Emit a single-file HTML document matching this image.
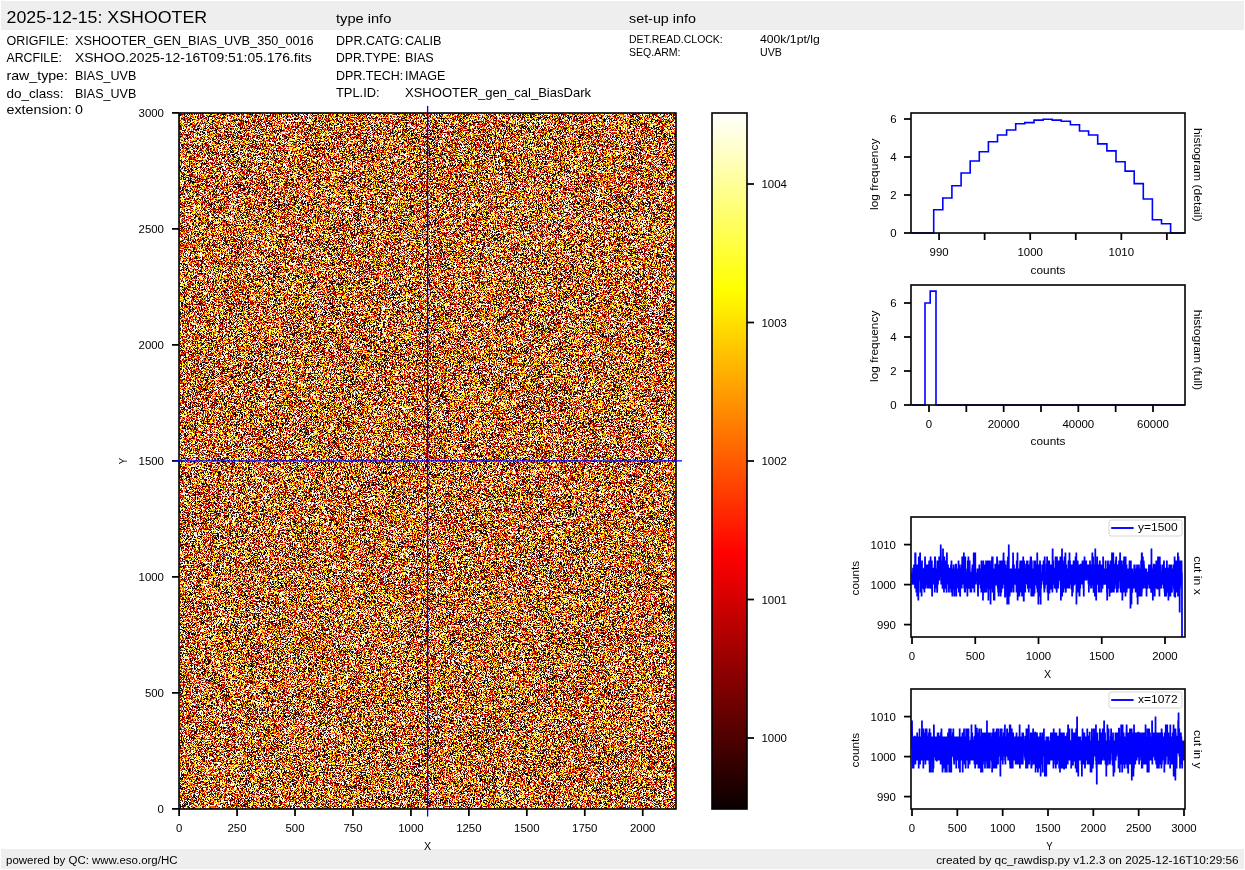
<!DOCTYPE html>
<html><head><meta charset="utf-8"><style>
html,body{margin:0;padding:0;background:#fff;width:1245px;height:870px;overflow:hidden}
#wrap{position:relative;width:1245px;height:870px}
#img{position:absolute;left:179px;top:113px;width:497px;height:696px;background:#bd753a}
svg{position:absolute;left:0;top:0}
text{font-family:"Liberation Sans",sans-serif;fill:#000}
</style></head><body><div id="wrap">
<canvas id="img" width="497" height="696"></canvas>
<svg width="1245" height="870" viewBox="0 0 1245 870">
<rect x="1.00" y="1.00" width="1243.00" height="29.00" fill="#eeeeee" stroke="none" stroke-width="0"/>
<rect x="1.00" y="849.00" width="1243.00" height="20.00" fill="#eeeeee" stroke="none" stroke-width="0"/>
<text x="6.50" y="22.70" font-size="16.97" text-anchor="start" textLength="200.70" lengthAdjust="spacingAndGlyphs">2025-12-15: XSHOOTER</text>
<text x="336.00" y="22.80" font-size="12.73" text-anchor="start" textLength="55.33" lengthAdjust="spacingAndGlyphs">type info</text>
<text x="629.00" y="22.70" font-size="12.73" text-anchor="start" textLength="66.89" lengthAdjust="spacingAndGlyphs">set-up info</text>
<text x="6.50" y="45.00" font-size="12.73" text-anchor="start" textLength="61.86" lengthAdjust="spacingAndGlyphs">ORIGFILE:</text>
<text x="75.00" y="45.00" font-size="12.73" text-anchor="start" textLength="238.69" lengthAdjust="spacingAndGlyphs">XSHOOTER_GEN_BIAS_UVB_350_0016</text>
<text x="6.50" y="61.90" font-size="12.73" text-anchor="start" textLength="55.30" lengthAdjust="spacingAndGlyphs">ARCFILE:</text>
<text x="75.00" y="61.90" font-size="12.73" text-anchor="start" textLength="236.61" lengthAdjust="spacingAndGlyphs">XSHOO.2025-12-16T09:51:05.176.fits</text>
<text x="6.50" y="80.00" font-size="12.73" text-anchor="start" textLength="61.41" lengthAdjust="spacingAndGlyphs">raw_type:</text>
<text x="75.00" y="80.00" font-size="12.73" text-anchor="start" textLength="61.28" lengthAdjust="spacingAndGlyphs">BIAS_UVB</text>
<text x="6.50" y="97.80" font-size="12.73" text-anchor="start" textLength="57.08" lengthAdjust="spacingAndGlyphs">do_class:</text>
<text x="75.00" y="97.80" font-size="12.73" text-anchor="start" textLength="61.28" lengthAdjust="spacingAndGlyphs">BIAS_UVB</text>
<text x="6.50" y="113.60" font-size="12.73" text-anchor="start" textLength="65.14" lengthAdjust="spacingAndGlyphs">extension:</text>
<text x="75.00" y="113.60" font-size="12.73" text-anchor="start" textLength="7.95" lengthAdjust="spacingAndGlyphs">0</text>
<text x="336.00" y="44.70" font-size="12.73" text-anchor="start" textLength="67.22" lengthAdjust="spacingAndGlyphs">DPR.CATG:</text>
<text x="405.00" y="44.70" font-size="12.73" text-anchor="start" textLength="36.52" lengthAdjust="spacingAndGlyphs">CALIB</text>
<text x="336.00" y="61.90" font-size="12.73" text-anchor="start" textLength="64.28" lengthAdjust="spacingAndGlyphs">DPR.TYPE:</text>
<text x="405.00" y="61.90" font-size="12.73" text-anchor="start" textLength="28.75" lengthAdjust="spacingAndGlyphs">BIAS</text>
<text x="336.00" y="79.70" font-size="12.73" text-anchor="start" textLength="67.25" lengthAdjust="spacingAndGlyphs">DPR.TECH:</text>
<text x="405.00" y="79.70" font-size="12.73" text-anchor="start" textLength="40.38" lengthAdjust="spacingAndGlyphs">IMAGE</text>
<text x="336.00" y="97.00" font-size="12.73" text-anchor="start" textLength="43.64" lengthAdjust="spacingAndGlyphs">TPL.ID:</text>
<text x="405.00" y="97.00" font-size="12.73" text-anchor="start" textLength="185.98" lengthAdjust="spacingAndGlyphs">XSHOOTER_gen_cal_BiasDark</text>
<text x="629.00" y="42.90" font-size="10.61" text-anchor="start" textLength="93.77" lengthAdjust="spacingAndGlyphs">DET.READ.CLOCK:</text>
<text x="760.00" y="42.90" font-size="10.61" text-anchor="start" textLength="59.72" lengthAdjust="spacingAndGlyphs">400k/1pt/lg</text>
<text x="629.00" y="55.90" font-size="10.61" text-anchor="start" textLength="51.53" lengthAdjust="spacingAndGlyphs">SEQ.ARM:</text>
<text x="760.00" y="55.90" font-size="10.61" text-anchor="start" textLength="21.88" lengthAdjust="spacingAndGlyphs">UVB</text>
<text x="6.00" y="864.00" font-size="10.61" text-anchor="start" textLength="171.48" lengthAdjust="spacingAndGlyphs">powered by QC: www.eso.org/HC</text>
<text x="1238.70" y="864.00" font-size="10.61" text-anchor="end" textLength="302.50" lengthAdjust="spacingAndGlyphs">created by qc_rawdisp.py v1.2.3 on 2025-12-16T10:29:56</text>
<rect x="179.00" y="113.00" width="497.00" height="696.00" fill="none" stroke="#000" stroke-width="1.6"/>
<line x1="179.12" y1="809.00" x2="179.12" y2="816.00" stroke="#000" stroke-width="1.75"/>
<text x="179.12" y="831.80" font-size="10.18" text-anchor="middle" textLength="6.36" lengthAdjust="spacingAndGlyphs">0</text>
<line x1="237.07" y1="809.00" x2="237.07" y2="816.00" stroke="#000" stroke-width="1.75"/>
<text x="237.07" y="831.80" font-size="10.18" text-anchor="middle" textLength="19.08" lengthAdjust="spacingAndGlyphs">250</text>
<line x1="295.02" y1="809.00" x2="295.02" y2="816.00" stroke="#000" stroke-width="1.75"/>
<text x="295.02" y="831.80" font-size="10.18" text-anchor="middle" textLength="19.08" lengthAdjust="spacingAndGlyphs">500</text>
<line x1="352.97" y1="809.00" x2="352.97" y2="816.00" stroke="#000" stroke-width="1.75"/>
<text x="352.97" y="831.80" font-size="10.18" text-anchor="middle" textLength="19.08" lengthAdjust="spacingAndGlyphs">750</text>
<line x1="410.93" y1="809.00" x2="410.93" y2="816.00" stroke="#000" stroke-width="1.75"/>
<text x="410.93" y="831.80" font-size="10.18" text-anchor="middle" textLength="25.44" lengthAdjust="spacingAndGlyphs">1000</text>
<line x1="468.88" y1="809.00" x2="468.88" y2="816.00" stroke="#000" stroke-width="1.75"/>
<text x="468.88" y="831.80" font-size="10.18" text-anchor="middle" textLength="25.44" lengthAdjust="spacingAndGlyphs">1250</text>
<line x1="526.83" y1="809.00" x2="526.83" y2="816.00" stroke="#000" stroke-width="1.75"/>
<text x="526.83" y="831.80" font-size="10.18" text-anchor="middle" textLength="25.44" lengthAdjust="spacingAndGlyphs">1500</text>
<line x1="584.78" y1="809.00" x2="584.78" y2="816.00" stroke="#000" stroke-width="1.75"/>
<text x="584.78" y="831.80" font-size="10.18" text-anchor="middle" textLength="25.44" lengthAdjust="spacingAndGlyphs">1750</text>
<line x1="642.74" y1="809.00" x2="642.74" y2="816.00" stroke="#000" stroke-width="1.75"/>
<text x="642.74" y="831.80" font-size="10.18" text-anchor="middle" textLength="25.44" lengthAdjust="spacingAndGlyphs">2000</text>
<line x1="172.00" y1="808.88" x2="179.00" y2="808.88" stroke="#000" stroke-width="1.75"/>
<text x="164.00" y="812.78" font-size="10.18" text-anchor="end" textLength="6.36" lengthAdjust="spacingAndGlyphs">0</text>
<line x1="172.00" y1="692.88" x2="179.00" y2="692.88" stroke="#000" stroke-width="1.75"/>
<text x="164.00" y="696.78" font-size="10.18" text-anchor="end" textLength="19.08" lengthAdjust="spacingAndGlyphs">500</text>
<line x1="172.00" y1="576.88" x2="179.00" y2="576.88" stroke="#000" stroke-width="1.75"/>
<text x="164.00" y="580.78" font-size="10.18" text-anchor="end" textLength="25.44" lengthAdjust="spacingAndGlyphs">1000</text>
<line x1="172.00" y1="460.88" x2="179.00" y2="460.88" stroke="#000" stroke-width="1.75"/>
<text x="164.00" y="464.78" font-size="10.18" text-anchor="end" textLength="25.44" lengthAdjust="spacingAndGlyphs">1500</text>
<line x1="172.00" y1="344.88" x2="179.00" y2="344.88" stroke="#000" stroke-width="1.75"/>
<text x="164.00" y="348.78" font-size="10.18" text-anchor="end" textLength="25.44" lengthAdjust="spacingAndGlyphs">2000</text>
<line x1="172.00" y1="228.88" x2="179.00" y2="228.88" stroke="#000" stroke-width="1.75"/>
<text x="164.00" y="232.78" font-size="10.18" text-anchor="end" textLength="25.44" lengthAdjust="spacingAndGlyphs">2500</text>
<line x1="172.00" y1="112.88" x2="179.00" y2="112.88" stroke="#000" stroke-width="1.75"/>
<text x="164.00" y="116.78" font-size="10.18" text-anchor="end" textLength="25.44" lengthAdjust="spacingAndGlyphs">3000</text>
<line x1="427.62" y1="106.00" x2="427.62" y2="816.50" stroke="#0000ff" stroke-width="1.3"/>
<line x1="174.00" y1="460.88" x2="682.00" y2="460.88" stroke="#0000ff" stroke-width="1.3"/>
<text x="427.62" y="850.00" font-size="10.61" text-anchor="middle" textLength="7.12" lengthAdjust="spacingAndGlyphs">X</text>
<text x="127.00" y="461.00" font-size="10.61" text-anchor="middle" textLength="6.36" lengthAdjust="spacingAndGlyphs" transform="rotate(-90 127.00 461.00)">Y</text>
<defs><linearGradient id="hot" x1="0" y1="1" x2="0" y2="0"><stop offset="0" stop-color="rgb(10,0,0)"/><stop offset="0.365079" stop-color="rgb(255,0,0)"/><stop offset="0.746032" stop-color="rgb(255,255,0)"/><stop offset="1" stop-color="rgb(255,255,255)"/></linearGradient></defs>
<rect x="712.00" y="113.00" width="35.00" height="696.00" fill="url(#hot)" stroke="#000" stroke-width="1.6"/>
<line x1="747.00" y1="738.00" x2="754.00" y2="738.00" stroke="#000" stroke-width="1.75"/>
<text x="761.50" y="742.00" font-size="10.18" text-anchor="start" textLength="25.44" lengthAdjust="spacingAndGlyphs">1000</text>
<line x1="747.00" y1="599.50" x2="754.00" y2="599.50" stroke="#000" stroke-width="1.75"/>
<text x="761.50" y="603.50" font-size="10.18" text-anchor="start" textLength="25.44" lengthAdjust="spacingAndGlyphs">1001</text>
<line x1="747.00" y1="461.00" x2="754.00" y2="461.00" stroke="#000" stroke-width="1.75"/>
<text x="761.50" y="465.00" font-size="10.18" text-anchor="start" textLength="25.44" lengthAdjust="spacingAndGlyphs">1002</text>
<line x1="747.00" y1="322.50" x2="754.00" y2="322.50" stroke="#000" stroke-width="1.75"/>
<text x="761.50" y="326.50" font-size="10.18" text-anchor="start" textLength="25.44" lengthAdjust="spacingAndGlyphs">1003</text>
<line x1="747.00" y1="184.00" x2="754.00" y2="184.00" stroke="#000" stroke-width="1.75"/>
<text x="761.50" y="188.00" font-size="10.18" text-anchor="start" textLength="25.44" lengthAdjust="spacingAndGlyphs">1004</text>
<polyline fill="none" stroke="#0000ff" stroke-width="1.6" points="912.0,233.0 933.7,233.0 933.7,209.8 942.8,209.8 942.8,198.0 951.9,198.0 951.9,185.7 961.1,185.7 961.1,173.0 970.2,173.0 970.2,161.0 979.3,161.0 979.3,151.7 988.4,151.7 988.4,141.8 997.5,141.8 997.5,135.0 1006.6,135.0 1006.6,130.0 1015.7,130.0 1015.7,123.8 1024.8,123.8 1024.8,122.6 1034.0,122.6 1034.0,120.1 1043.1,120.1 1043.1,119.2 1052.2,119.2 1052.2,120.1 1061.3,120.1 1061.3,121.3 1070.4,121.3 1070.4,124.7 1079.5,124.7 1079.5,131.0 1088.6,131.0 1088.6,135.0 1097.7,135.0 1097.7,143.9 1106.9,143.9 1106.9,150.9 1116.0,150.9 1116.0,161.8 1125.1,161.8 1125.1,171.1 1134.2,171.1 1134.2,183.6 1143.3,183.6 1143.3,199.0 1152.4,199.0 1152.4,219.7 1161.5,219.7 1161.5,223.7 1170.6,223.7 1170.6,233.0 1185.0,233.0"/>
<rect x="911.00" y="113.00" width="274.00" height="120.00" fill="none" stroke="#000" stroke-width="1.6"/>
<line x1="939.08" y1="233.00" x2="939.08" y2="240.00" stroke="#000" stroke-width="1.75"/>
<text x="939.08" y="256.20" font-size="10.18" text-anchor="middle" textLength="19.08" lengthAdjust="spacingAndGlyphs">990</text>
<line x1="984.64" y1="233.00" x2="984.64" y2="240.00" stroke="#000" stroke-width="1.75"/>
<line x1="1030.20" y1="233.00" x2="1030.20" y2="240.00" stroke="#000" stroke-width="1.75"/>
<text x="1030.20" y="256.20" font-size="10.18" text-anchor="middle" textLength="25.44" lengthAdjust="spacingAndGlyphs">1000</text>
<line x1="1075.76" y1="233.00" x2="1075.76" y2="240.00" stroke="#000" stroke-width="1.75"/>
<line x1="1121.32" y1="233.00" x2="1121.32" y2="240.00" stroke="#000" stroke-width="1.75"/>
<text x="1121.32" y="256.20" font-size="10.18" text-anchor="middle" textLength="25.44" lengthAdjust="spacingAndGlyphs">1010</text>
<line x1="1166.88" y1="233.00" x2="1166.88" y2="240.00" stroke="#000" stroke-width="1.75"/>
<line x1="904.00" y1="233.00" x2="911.00" y2="233.00" stroke="#000" stroke-width="1.75"/>
<text x="896.60" y="236.90" font-size="10.18" text-anchor="end" textLength="6.36" lengthAdjust="spacingAndGlyphs">0</text>
<line x1="904.00" y1="195.00" x2="911.00" y2="195.00" stroke="#000" stroke-width="1.75"/>
<text x="896.60" y="198.90" font-size="10.18" text-anchor="end" textLength="6.36" lengthAdjust="spacingAndGlyphs">2</text>
<line x1="904.00" y1="157.00" x2="911.00" y2="157.00" stroke="#000" stroke-width="1.75"/>
<text x="896.60" y="160.90" font-size="10.18" text-anchor="end" textLength="6.36" lengthAdjust="spacingAndGlyphs">4</text>
<line x1="904.00" y1="119.00" x2="911.00" y2="119.00" stroke="#000" stroke-width="1.75"/>
<text x="896.60" y="122.90" font-size="10.18" text-anchor="end" textLength="6.36" lengthAdjust="spacingAndGlyphs">6</text>
<text x="1048.00" y="273.60" font-size="10.61" text-anchor="middle" textLength="34.77" lengthAdjust="spacingAndGlyphs">counts</text>
<text x="878.30" y="174.30" font-size="10.61" text-anchor="middle" textLength="71.36" lengthAdjust="spacingAndGlyphs" transform="rotate(-90 878.30 174.30)">log frequency</text>
<text x="1193.60" y="174.80" font-size="10.61" text-anchor="middle" textLength="93.44" lengthAdjust="spacingAndGlyphs" transform="rotate(90 1193.60 174.80)">histogram (detail)</text>
<polyline fill="none" stroke="#0000ff" stroke-width="1.6" points="912.0,405.0 925.0,405.0 925.0,303.0 930.2,303.0 930.2,291.1 936.0,291.1 936.0,405.0 1185.0,405.0"/>
<rect x="911.00" y="285.00" width="274.00" height="120.00" fill="none" stroke="#000" stroke-width="1.6"/>
<line x1="929.00" y1="405.00" x2="929.00" y2="412.00" stroke="#000" stroke-width="1.75"/>
<text x="929.00" y="428.00" font-size="10.18" text-anchor="middle" textLength="6.36" lengthAdjust="spacingAndGlyphs">0</text>
<line x1="966.33" y1="405.00" x2="966.33" y2="412.00" stroke="#000" stroke-width="1.75"/>
<line x1="1003.67" y1="405.00" x2="1003.67" y2="412.00" stroke="#000" stroke-width="1.75"/>
<text x="1003.67" y="428.00" font-size="10.18" text-anchor="middle" textLength="31.80" lengthAdjust="spacingAndGlyphs">20000</text>
<line x1="1041.00" y1="405.00" x2="1041.00" y2="412.00" stroke="#000" stroke-width="1.75"/>
<line x1="1078.33" y1="405.00" x2="1078.33" y2="412.00" stroke="#000" stroke-width="1.75"/>
<text x="1078.33" y="428.00" font-size="10.18" text-anchor="middle" textLength="31.80" lengthAdjust="spacingAndGlyphs">40000</text>
<line x1="1115.66" y1="405.00" x2="1115.66" y2="412.00" stroke="#000" stroke-width="1.75"/>
<line x1="1153.00" y1="405.00" x2="1153.00" y2="412.00" stroke="#000" stroke-width="1.75"/>
<text x="1153.00" y="428.00" font-size="10.18" text-anchor="middle" textLength="31.80" lengthAdjust="spacingAndGlyphs">60000</text>
<line x1="904.00" y1="405.00" x2="911.00" y2="405.00" stroke="#000" stroke-width="1.75"/>
<text x="896.60" y="408.90" font-size="10.18" text-anchor="end" textLength="6.36" lengthAdjust="spacingAndGlyphs">0</text>
<line x1="904.00" y1="371.00" x2="911.00" y2="371.00" stroke="#000" stroke-width="1.75"/>
<text x="896.60" y="374.90" font-size="10.18" text-anchor="end" textLength="6.36" lengthAdjust="spacingAndGlyphs">2</text>
<line x1="904.00" y1="337.00" x2="911.00" y2="337.00" stroke="#000" stroke-width="1.75"/>
<text x="896.60" y="340.90" font-size="10.18" text-anchor="end" textLength="6.36" lengthAdjust="spacingAndGlyphs">4</text>
<line x1="904.00" y1="303.00" x2="911.00" y2="303.00" stroke="#000" stroke-width="1.75"/>
<text x="896.60" y="306.90" font-size="10.18" text-anchor="end" textLength="6.36" lengthAdjust="spacingAndGlyphs">6</text>
<text x="1048.00" y="445.30" font-size="10.61" text-anchor="middle" textLength="34.77" lengthAdjust="spacingAndGlyphs">counts</text>
<text x="878.30" y="346.30" font-size="10.61" text-anchor="middle" textLength="71.36" lengthAdjust="spacingAndGlyphs" transform="rotate(-90 878.30 346.30)">log frequency</text>
<text x="1193.60" y="349.90" font-size="10.61" text-anchor="middle" textLength="80.22" lengthAdjust="spacingAndGlyphs" transform="rotate(90 1193.60 349.90)">histogram (full)</text>
<clipPath id="cX"><rect x="911" y="517" width="274" height="120"/></clipPath>
<polyline clip-path="url(#cX)" fill="none" stroke="#0000ff" stroke-width="1.75" stroke-linejoin="miter" points="912.00,576.6 912.13,576.6 912.25,572.6 912.38,584.6 912.51,580.6 912.63,572.6 912.76,580.6 912.89,580.6 913.01,568.6 913.14,568.6 913.26,580.6 913.39,580.6 913.52,584.6 913.64,580.6 913.77,572.6 913.90,576.6 914.02,564.6 914.15,576.6 914.28,580.6 914.40,576.6 914.53,576.6 914.66,584.6 914.78,576.6 914.91,576.6 915.04,588.6 915.16,552.6 915.29,560.6 915.42,580.6 915.54,552.6 915.67,576.6 915.79,564.6 915.92,588.6 916.05,576.6 916.17,572.6 916.30,592.6 916.43,564.6 916.55,592.6 916.68,584.6 916.81,576.6 916.93,564.6 917.06,580.6 917.19,596.6 917.31,572.6 917.44,584.6 917.57,572.6 917.69,580.6 917.82,572.6 917.95,588.6 918.07,572.6 918.20,564.6 918.33,600.6 918.45,580.6 918.58,572.6 918.70,576.6 918.83,556.6 918.96,576.6 919.08,572.6 919.21,572.6 919.34,580.6 919.46,576.6 919.59,576.6 919.72,572.6 919.84,576.6 919.97,580.6 920.10,552.6 920.22,576.6 920.35,572.6 920.48,592.6 920.60,588.6 920.73,564.6 920.86,576.6 920.98,588.6 921.11,564.6 921.23,572.6 921.36,584.6 921.49,564.6 921.61,596.6 921.74,564.6 921.87,572.6 921.99,560.6 922.12,580.6 922.25,588.6 922.37,572.6 922.50,572.6 922.63,568.6 922.75,576.6 922.88,572.6 923.01,568.6 923.13,588.6 923.26,580.6 923.38,576.6 923.51,576.6 923.64,584.6 923.76,576.6 923.89,588.6 924.02,588.6 924.14,568.6 924.27,568.6 924.40,592.6 924.52,568.6 924.65,568.6 924.78,580.6 924.90,576.6 925.03,556.6 925.16,568.6 925.28,576.6 925.41,580.6 925.54,572.6 925.66,580.6 925.79,588.6 925.91,576.6 926.04,564.6 926.17,580.6 926.29,584.6 926.42,564.6 926.55,572.6 926.67,572.6 926.80,564.6 926.93,576.6 927.05,572.6 927.18,568.6 927.31,580.6 927.43,580.6 927.56,564.6 927.69,580.6 927.81,588.6 927.94,572.6 928.07,584.6 928.19,584.6 928.32,572.6 928.45,588.6 928.57,576.6 928.70,580.6 928.82,580.6 928.95,588.6 929.08,564.6 929.20,560.6 929.33,572.6 929.46,580.6 929.58,584.6 929.71,584.6 929.84,572.6 929.96,576.6 930.09,588.6 930.22,576.6 930.34,572.6 930.47,588.6 930.60,556.6 930.72,584.6 930.85,588.6 930.98,572.6 931.10,576.6 931.23,580.6 931.35,580.6 931.48,580.6 931.61,572.6 931.73,588.6 931.86,560.6 931.99,580.6 932.11,596.6 932.24,568.6 932.37,572.6 932.49,576.6 932.62,580.6 932.75,576.6 932.87,572.6 933.00,572.6 933.13,584.6 933.25,576.6 933.38,576.6 933.50,568.6 933.63,568.6 933.76,572.6 933.88,584.6 934.01,576.6 934.14,572.6 934.26,572.6 934.39,572.6 934.52,572.6 934.64,564.6 934.77,592.6 934.90,556.6 935.02,580.6 935.15,556.6 935.28,564.6 935.40,568.6 935.53,588.6 935.66,580.6 935.78,588.6 935.91,568.6 936.03,576.6 936.16,580.6 936.29,588.6 936.41,580.6 936.54,576.6 936.67,580.6 936.79,576.6 936.92,576.6 937.05,588.6 937.17,592.6 937.30,588.6 937.43,560.6 937.55,576.6 937.68,576.6 937.81,580.6 937.93,576.6 938.06,584.6 938.19,560.6 938.31,568.6 938.44,568.6 938.57,572.6 938.69,576.6 938.82,572.6 938.94,576.6 939.07,564.6 939.20,556.6 939.32,580.6 939.45,568.6 939.58,568.6 939.70,568.6 939.83,568.6 939.96,572.6 940.08,572.6 940.21,560.6 940.34,568.6 940.46,564.6 940.59,576.6 940.72,544.6 940.84,552.6 940.97,576.6 941.10,564.6 941.22,584.6 941.35,564.6 941.47,584.6 941.60,568.6 941.73,564.6 941.85,576.6 941.98,576.6 942.11,572.6 942.23,560.6 942.36,576.6 942.49,588.6 942.61,572.6 942.74,572.6 942.87,572.6 942.99,548.6 943.12,576.6 943.25,568.6 943.37,580.6 943.50,588.6 943.62,588.6 943.75,580.6 943.88,560.6 944.00,592.6 944.13,576.6 944.26,576.6 944.38,556.6 944.51,588.6 944.64,584.6 944.76,568.6 944.89,580.6 945.02,584.6 945.14,572.6 945.27,572.6 945.40,580.6 945.52,564.6 945.65,568.6 945.78,560.6 945.90,568.6 946.03,576.6 946.15,588.6 946.28,584.6 946.41,572.6 946.53,588.6 946.66,592.6 946.79,576.6 946.91,552.6 947.04,572.6 947.17,564.6 947.29,584.6 947.42,572.6 947.55,564.6 947.67,568.6 947.80,576.6 947.93,572.6 948.05,564.6 948.18,576.6 948.31,572.6 948.43,572.6 948.56,584.6 948.68,576.6 948.81,576.6 948.94,592.6 949.06,584.6 949.19,576.6 949.32,584.6 949.44,568.6 949.57,568.6 949.70,580.6 949.82,568.6 949.95,572.6 950.08,568.6 950.20,580.6 950.33,584.6 950.46,584.6 950.58,588.6 950.71,572.6 950.84,588.6 950.96,564.6 951.09,576.6 951.22,592.6 951.34,580.6 951.47,560.6 951.59,580.6 951.72,572.6 951.85,580.6 951.97,588.6 952.10,568.6 952.23,580.6 952.35,596.6 952.48,576.6 952.61,568.6 952.73,584.6 952.86,572.6 952.99,568.6 953.11,572.6 953.24,588.6 953.37,588.6 953.49,576.6 953.62,564.6 953.75,576.6 953.87,580.6 954.00,572.6 954.12,576.6 954.25,584.6 954.38,596.6 954.50,584.6 954.63,572.6 954.76,584.6 954.88,584.6 955.01,568.6 955.14,576.6 955.26,584.6 955.39,584.6 955.52,580.6 955.64,568.6 955.77,564.6 955.90,564.6 956.02,588.6 956.15,564.6 956.27,596.6 956.40,584.6 956.53,576.6 956.65,580.6 956.78,576.6 956.91,576.6 957.03,576.6 957.16,584.6 957.29,568.6 957.41,576.6 957.54,588.6 957.67,576.6 957.79,568.6 957.92,588.6 958.05,568.6 958.17,580.6 958.30,572.6 958.43,572.6 958.55,560.6 958.68,572.6 958.80,584.6 958.93,592.6 959.06,576.6 959.18,580.6 959.31,564.6 959.44,572.6 959.56,568.6 959.69,576.6 959.82,588.6 959.94,584.6 960.07,596.6 960.20,592.6 960.32,568.6 960.45,576.6 960.58,576.6 960.70,576.6 960.83,568.6 960.96,568.6 961.08,580.6 961.21,580.6 961.34,564.6 961.46,568.6 961.59,580.6 961.71,588.6 961.84,572.6 961.97,572.6 962.09,580.6 962.22,556.6 962.35,572.6 962.47,576.6 962.60,556.6 962.73,584.6 962.85,576.6 962.98,584.6 963.11,560.6 963.23,580.6 963.36,576.6 963.49,572.6 963.61,584.6 963.74,568.6 963.87,552.6 963.99,572.6 964.12,580.6 964.24,588.6 964.37,580.6 964.50,576.6 964.62,576.6 964.75,592.6 964.88,560.6 965.00,572.6 965.13,592.6 965.26,556.6 965.38,580.6 965.51,572.6 965.64,572.6 965.76,568.6 965.89,572.6 966.02,572.6 966.14,588.6 966.27,572.6 966.39,580.6 966.52,576.6 966.65,572.6 966.77,576.6 966.90,572.6 967.03,580.6 967.15,580.6 967.28,588.6 967.41,596.6 967.53,588.6 967.66,576.6 967.79,560.6 967.91,584.6 968.04,576.6 968.17,580.6 968.29,572.6 968.42,556.6 968.55,564.6 968.67,580.6 968.80,580.6 968.92,572.6 969.05,584.6 969.18,584.6 969.30,588.6 969.43,572.6 969.56,584.6 969.68,560.6 969.81,580.6 969.94,580.6 970.06,576.6 970.19,576.6 970.32,572.6 970.44,592.6 970.57,580.6 970.70,576.6 970.82,592.6 970.95,584.6 971.08,572.6 971.20,572.6 971.33,592.6 971.46,584.6 971.58,588.6 971.71,572.6 971.83,588.6 971.96,576.6 972.09,568.6 972.21,580.6 972.34,568.6 972.47,564.6 972.59,584.6 972.72,584.6 972.85,584.6 972.97,580.6 973.10,576.6 973.23,588.6 973.35,572.6 973.48,584.6 973.61,568.6 973.73,552.6 973.86,576.6 973.99,556.6 974.11,564.6 974.24,572.6 974.36,592.6 974.49,572.6 974.62,584.6 974.74,568.6 974.87,564.6 975.00,572.6 975.12,580.6 975.25,552.6 975.38,572.6 975.50,568.6 975.63,580.6 975.76,572.6 975.88,584.6 976.01,576.6 976.14,576.6 976.26,580.6 976.39,580.6 976.51,576.6 976.64,576.6 976.77,580.6 976.89,580.6 977.02,580.6 977.15,576.6 977.27,580.6 977.40,572.6 977.53,580.6 977.65,568.6 977.78,584.6 977.91,588.6 978.03,596.6 978.16,580.6 978.29,580.6 978.41,572.6 978.54,580.6 978.67,584.6 978.79,568.6 978.92,580.6 979.04,568.6 979.17,576.6 979.30,564.6 979.42,580.6 979.55,572.6 979.68,584.6 979.80,580.6 979.93,580.6 980.06,576.6 980.18,572.6 980.31,584.6 980.44,572.6 980.56,588.6 980.69,580.6 980.82,576.6 980.94,568.6 981.07,572.6 981.20,576.6 981.32,592.6 981.45,560.6 981.58,572.6 981.70,568.6 981.83,564.6 981.95,576.6 982.08,584.6 982.21,572.6 982.33,584.6 982.46,572.6 982.59,580.6 982.71,572.6 982.84,580.6 982.97,600.6 983.09,568.6 983.22,580.6 983.35,560.6 983.47,576.6 983.60,588.6 983.73,572.6 983.85,588.6 983.98,592.6 984.11,588.6 984.23,576.6 984.36,576.6 984.48,572.6 984.61,572.6 984.74,572.6 984.86,564.6 984.99,580.6 985.12,568.6 985.24,576.6 985.37,592.6 985.50,568.6 985.62,588.6 985.75,568.6 985.88,576.6 986.00,568.6 986.13,560.6 986.26,568.6 986.38,592.6 986.51,576.6 986.63,580.6 986.76,576.6 986.89,576.6 987.01,568.6 987.14,576.6 987.27,584.6 987.39,560.6 987.52,580.6 987.65,580.6 987.77,588.6 987.90,580.6 988.03,584.6 988.15,560.6 988.28,564.6 988.41,600.6 988.53,568.6 988.66,576.6 988.79,588.6 988.91,588.6 989.04,568.6 989.16,576.6 989.29,568.6 989.42,584.6 989.54,560.6 989.67,572.6 989.80,576.6 989.92,568.6 990.05,576.6 990.18,580.6 990.30,584.6 990.43,576.6 990.56,604.6 990.68,584.6 990.81,588.6 990.94,568.6 991.06,564.6 991.19,580.6 991.32,580.6 991.44,560.6 991.57,572.6 991.70,560.6 991.82,576.6 991.95,568.6 992.07,556.6 992.20,580.6 992.33,568.6 992.45,568.6 992.58,592.6 992.71,556.6 992.83,584.6 992.96,568.6 993.09,576.6 993.21,584.6 993.34,580.6 993.47,568.6 993.59,588.6 993.72,576.6 993.85,600.6 993.97,584.6 994.10,600.6 994.23,580.6 994.35,576.6 994.48,600.6 994.60,580.6 994.73,584.6 994.86,580.6 994.98,572.6 995.11,572.6 995.24,564.6 995.36,564.6 995.49,580.6 995.62,568.6 995.74,568.6 995.87,576.6 996.00,580.6 996.12,584.6 996.25,584.6 996.38,568.6 996.50,580.6 996.63,576.6 996.75,584.6 996.88,584.6 997.01,556.6 997.13,560.6 997.26,568.6 997.39,576.6 997.51,584.6 997.64,560.6 997.77,588.6 997.89,576.6 998.02,576.6 998.15,592.6 998.27,576.6 998.40,564.6 998.53,568.6 998.65,596.6 998.78,564.6 998.91,588.6 999.03,576.6 999.16,576.6 999.28,588.6 999.41,564.6 999.54,576.6 999.66,572.6 999.79,592.6 999.92,584.6 1000.04,560.6 1000.17,576.6 1000.30,580.6 1000.42,576.6 1000.55,584.6 1000.68,596.6 1000.80,588.6 1000.93,576.6 1001.06,568.6 1001.18,572.6 1001.31,592.6 1001.44,584.6 1001.56,584.6 1001.69,560.6 1001.82,588.6 1001.94,584.6 1002.07,572.6 1002.19,560.6 1002.32,568.6 1002.45,568.6 1002.57,560.6 1002.70,588.6 1002.83,568.6 1002.95,580.6 1003.08,568.6 1003.21,584.6 1003.33,564.6 1003.46,556.6 1003.59,552.6 1003.71,584.6 1003.84,580.6 1003.97,572.6 1004.09,560.6 1004.22,584.6 1004.35,560.6 1004.47,584.6 1004.60,560.6 1004.72,576.6 1004.85,568.6 1004.98,596.6 1005.10,596.6 1005.23,568.6 1005.36,596.6 1005.48,564.6 1005.61,588.6 1005.74,580.6 1005.86,568.6 1005.99,576.6 1006.12,576.6 1006.24,576.6 1006.37,580.6 1006.50,568.6 1006.62,572.6 1006.75,572.6 1006.88,572.6 1007.00,580.6 1007.13,584.6 1007.25,604.6 1007.38,560.6 1007.51,576.6 1007.63,572.6 1007.76,572.6 1007.89,584.6 1008.01,556.6 1008.14,572.6 1008.27,580.6 1008.39,576.6 1008.52,580.6 1008.65,604.6 1008.77,544.6 1008.90,572.6 1009.03,580.6 1009.15,584.6 1009.28,580.6 1009.40,584.6 1009.53,592.6 1009.66,596.6 1009.78,584.6 1009.91,572.6 1010.04,580.6 1010.16,568.6 1010.29,572.6 1010.42,592.6 1010.54,576.6 1010.67,568.6 1010.80,588.6 1010.92,584.6 1011.05,588.6 1011.18,580.6 1011.30,584.6 1011.43,584.6 1011.56,592.6 1011.68,568.6 1011.81,588.6 1011.93,576.6 1012.06,580.6 1012.19,580.6 1012.31,568.6 1012.44,580.6 1012.57,568.6 1012.69,588.6 1012.82,564.6 1012.95,580.6 1013.07,552.6 1013.20,564.6 1013.33,576.6 1013.45,580.6 1013.58,592.6 1013.71,572.6 1013.83,576.6 1013.96,564.6 1014.09,572.6 1014.21,568.6 1014.34,572.6 1014.47,576.6 1014.59,572.6 1014.72,584.6 1014.84,568.6 1014.97,584.6 1015.10,580.6 1015.22,568.6 1015.35,572.6 1015.48,576.6 1015.60,576.6 1015.73,576.6 1015.86,576.6 1015.98,572.6 1016.11,580.6 1016.24,580.6 1016.36,576.6 1016.49,592.6 1016.62,580.6 1016.74,560.6 1016.87,584.6 1017.00,576.6 1017.12,576.6 1017.25,576.6 1017.37,580.6 1017.50,552.6 1017.63,600.6 1017.75,580.6 1017.88,588.6 1018.01,576.6 1018.13,580.6 1018.26,572.6 1018.39,580.6 1018.51,576.6 1018.64,568.6 1018.77,580.6 1018.89,584.6 1019.02,584.6 1019.15,568.6 1019.27,576.6 1019.40,596.6 1019.52,572.6 1019.65,584.6 1019.78,572.6 1019.90,576.6 1020.03,564.6 1020.16,564.6 1020.28,560.6 1020.41,568.6 1020.54,560.6 1020.66,576.6 1020.79,576.6 1020.92,560.6 1021.04,576.6 1021.17,592.6 1021.30,576.6 1021.42,576.6 1021.55,592.6 1021.68,560.6 1021.80,584.6 1021.93,576.6 1022.06,596.6 1022.18,572.6 1022.31,576.6 1022.43,572.6 1022.56,568.6 1022.69,580.6 1022.81,584.6 1022.94,572.6 1023.07,576.6 1023.19,556.6 1023.32,572.6 1023.45,584.6 1023.57,580.6 1023.70,600.6 1023.83,600.6 1023.95,564.6 1024.08,560.6 1024.21,564.6 1024.33,572.6 1024.46,584.6 1024.59,576.6 1024.71,568.6 1024.84,564.6 1024.96,564.6 1025.09,580.6 1025.22,592.6 1025.34,580.6 1025.47,584.6 1025.60,568.6 1025.72,572.6 1025.85,576.6 1025.98,576.6 1026.10,584.6 1026.23,576.6 1026.36,580.6 1026.48,568.6 1026.61,580.6 1026.74,580.6 1026.86,564.6 1026.99,560.6 1027.12,576.6 1027.24,584.6 1027.37,576.6 1027.49,564.6 1027.62,560.6 1027.75,584.6 1027.87,588.6 1028.00,572.6 1028.13,584.6 1028.25,564.6 1028.38,580.6 1028.51,576.6 1028.63,584.6 1028.76,592.6 1028.89,580.6 1029.01,576.6 1029.14,580.6 1029.27,568.6 1029.39,568.6 1029.52,588.6 1029.64,580.6 1029.77,568.6 1029.90,568.6 1030.02,568.6 1030.15,560.6 1030.28,580.6 1030.40,572.6 1030.53,576.6 1030.66,556.6 1030.78,584.6 1030.91,576.6 1031.04,580.6 1031.16,556.6 1031.29,596.6 1031.42,576.6 1031.54,588.6 1031.67,588.6 1031.80,560.6 1031.92,584.6 1032.05,580.6 1032.17,576.6 1032.30,576.6 1032.43,580.6 1032.55,584.6 1032.68,572.6 1032.81,568.6 1032.93,596.6 1033.06,572.6 1033.19,580.6 1033.31,576.6 1033.44,568.6 1033.57,588.6 1033.69,596.6 1033.82,584.6 1033.95,584.6 1034.07,572.6 1034.20,560.6 1034.33,572.6 1034.45,592.6 1034.58,592.6 1034.70,564.6 1034.83,576.6 1034.96,584.6 1035.08,572.6 1035.21,560.6 1035.34,572.6 1035.46,564.6 1035.59,572.6 1035.72,580.6 1035.84,568.6 1035.97,572.6 1036.10,580.6 1036.22,584.6 1036.35,576.6 1036.48,584.6 1036.60,584.6 1036.73,580.6 1036.86,580.6 1036.98,584.6 1037.11,588.6 1037.23,552.6 1037.36,564.6 1037.49,564.6 1037.61,592.6 1037.74,572.6 1037.87,588.6 1037.99,572.6 1038.12,580.6 1038.25,576.6 1038.37,604.6 1038.50,564.6 1038.63,572.6 1038.75,572.6 1038.88,576.6 1039.01,596.6 1039.13,584.6 1039.26,576.6 1039.39,568.6 1039.51,580.6 1039.64,592.6 1039.77,564.6 1039.89,580.6 1040.02,560.6 1040.14,568.6 1040.27,580.6 1040.40,564.6 1040.52,580.6 1040.65,604.6 1040.78,580.6 1040.90,576.6 1041.03,588.6 1041.16,576.6 1041.28,576.6 1041.41,584.6 1041.54,580.6 1041.66,576.6 1041.79,572.6 1041.92,576.6 1042.04,580.6 1042.17,576.6 1042.30,576.6 1042.42,564.6 1042.55,576.6 1042.67,568.6 1042.80,580.6 1042.93,564.6 1043.05,568.6 1043.18,576.6 1043.31,576.6 1043.43,572.6 1043.56,560.6 1043.69,584.6 1043.81,572.6 1043.94,580.6 1044.07,588.6 1044.19,572.6 1044.32,592.6 1044.45,580.6 1044.57,568.6 1044.70,556.6 1044.83,588.6 1044.95,584.6 1045.08,584.6 1045.20,580.6 1045.33,572.6 1045.46,576.6 1045.58,580.6 1045.71,576.6 1045.84,580.6 1045.96,580.6 1046.09,580.6 1046.22,584.6 1046.34,580.6 1046.47,584.6 1046.60,564.6 1046.72,564.6 1046.85,572.6 1046.98,584.6 1047.10,556.6 1047.23,572.6 1047.36,576.6 1047.48,592.6 1047.61,572.6 1047.73,588.6 1047.86,560.6 1047.99,580.6 1048.11,576.6 1048.24,600.6 1048.37,564.6 1048.49,584.6 1048.62,564.6 1048.75,572.6 1048.87,576.6 1049.00,576.6 1049.13,584.6 1049.25,560.6 1049.38,592.6 1049.51,592.6 1049.63,576.6 1049.76,584.6 1049.88,576.6 1050.01,580.6 1050.14,572.6 1050.26,584.6 1050.39,572.6 1050.52,576.6 1050.64,576.6 1050.77,580.6 1050.90,564.6 1051.02,588.6 1051.15,588.6 1051.28,576.6 1051.40,576.6 1051.53,568.6 1051.66,572.6 1051.78,568.6 1051.91,568.6 1052.04,564.6 1052.16,584.6 1052.29,576.6 1052.41,592.6 1052.54,556.6 1052.67,548.6 1052.79,584.6 1052.92,580.6 1053.05,572.6 1053.17,564.6 1053.30,560.6 1053.43,580.6 1053.55,572.6 1053.68,568.6 1053.81,576.6 1053.93,584.6 1054.06,580.6 1054.19,568.6 1054.31,568.6 1054.44,572.6 1054.57,588.6 1054.69,576.6 1054.82,576.6 1054.94,568.6 1055.07,568.6 1055.20,584.6 1055.32,584.6 1055.45,580.6 1055.58,556.6 1055.70,568.6 1055.83,588.6 1055.96,564.6 1056.08,564.6 1056.21,588.6 1056.34,588.6 1056.46,576.6 1056.59,588.6 1056.72,592.6 1056.84,564.6 1056.97,556.6 1057.10,588.6 1057.22,580.6 1057.35,568.6 1057.47,572.6 1057.60,560.6 1057.73,568.6 1057.85,576.6 1057.98,588.6 1058.11,572.6 1058.23,588.6 1058.36,568.6 1058.49,584.6 1058.61,568.6 1058.74,560.6 1058.87,580.6 1058.99,564.6 1059.12,580.6 1059.25,572.6 1059.37,572.6 1059.50,576.6 1059.63,560.6 1059.75,572.6 1059.88,564.6 1060.01,568.6 1060.13,580.6 1060.26,576.6 1060.38,556.6 1060.51,572.6 1060.64,576.6 1060.76,564.6 1060.89,600.6 1061.02,580.6 1061.14,568.6 1061.27,572.6 1061.40,568.6 1061.52,576.6 1061.65,588.6 1061.78,580.6 1061.90,568.6 1062.03,548.6 1062.16,596.6 1062.28,580.6 1062.41,568.6 1062.54,580.6 1062.66,560.6 1062.79,572.6 1062.91,580.6 1063.04,568.6 1063.17,572.6 1063.29,568.6 1063.42,592.6 1063.55,568.6 1063.67,580.6 1063.80,572.6 1063.93,576.6 1064.05,572.6 1064.18,584.6 1064.31,572.6 1064.43,568.6 1064.56,556.6 1064.69,564.6 1064.81,588.6 1064.94,572.6 1065.07,572.6 1065.19,564.6 1065.32,576.6 1065.44,552.6 1065.57,564.6 1065.70,588.6 1065.82,592.6 1065.95,584.6 1066.08,568.6 1066.20,572.6 1066.33,564.6 1066.46,588.6 1066.58,580.6 1066.71,568.6 1066.84,576.6 1066.96,576.6 1067.09,568.6 1067.22,576.6 1067.34,576.6 1067.47,580.6 1067.60,588.6 1067.72,572.6 1067.85,572.6 1067.97,568.6 1068.10,576.6 1068.23,576.6 1068.35,588.6 1068.48,560.6 1068.61,576.6 1068.73,564.6 1068.86,584.6 1068.99,568.6 1069.11,576.6 1069.24,572.6 1069.37,588.6 1069.49,552.6 1069.62,584.6 1069.75,580.6 1069.87,580.6 1070.00,560.6 1070.12,568.6 1070.25,564.6 1070.38,580.6 1070.50,576.6 1070.63,584.6 1070.76,576.6 1070.88,564.6 1071.01,576.6 1071.14,576.6 1071.26,572.6 1071.39,580.6 1071.52,588.6 1071.64,588.6 1071.77,568.6 1071.90,568.6 1072.02,584.6 1072.15,596.6 1072.28,580.6 1072.40,576.6 1072.53,564.6 1072.65,584.6 1072.78,576.6 1072.91,592.6 1073.03,584.6 1073.16,568.6 1073.29,584.6 1073.41,580.6 1073.54,560.6 1073.67,580.6 1073.79,584.6 1073.92,584.6 1074.05,572.6 1074.17,584.6 1074.30,576.6 1074.43,568.6 1074.55,572.6 1074.68,568.6 1074.81,572.6 1074.93,580.6 1075.06,568.6 1075.18,560.6 1075.31,584.6 1075.44,576.6 1075.56,556.6 1075.69,576.6 1075.82,576.6 1075.94,580.6 1076.07,576.6 1076.20,580.6 1076.32,552.6 1076.45,604.6 1076.58,580.6 1076.70,584.6 1076.83,572.6 1076.96,576.6 1077.08,568.6 1077.21,576.6 1077.34,588.6 1077.46,568.6 1077.59,584.6 1077.71,560.6 1077.84,592.6 1077.97,564.6 1078.09,568.6 1078.22,568.6 1078.35,572.6 1078.47,568.6 1078.60,564.6 1078.73,572.6 1078.85,572.6 1078.98,576.6 1079.11,592.6 1079.23,564.6 1079.36,596.6 1079.49,580.6 1079.61,596.6 1079.74,580.6 1079.87,564.6 1079.99,584.6 1080.12,580.6 1080.24,588.6 1080.37,572.6 1080.50,580.6 1080.62,576.6 1080.75,564.6 1080.88,564.6 1081.00,572.6 1081.13,580.6 1081.26,572.6 1081.38,572.6 1081.51,568.6 1081.64,584.6 1081.76,564.6 1081.89,576.6 1082.02,564.6 1082.14,564.6 1082.27,564.6 1082.40,564.6 1082.52,560.6 1082.65,576.6 1082.78,572.6 1082.90,584.6 1083.03,568.6 1083.15,572.6 1083.28,564.6 1083.41,588.6 1083.53,580.6 1083.66,580.6 1083.79,596.6 1083.91,572.6 1084.04,560.6 1084.17,564.6 1084.29,560.6 1084.42,568.6 1084.55,556.6 1084.67,572.6 1084.80,580.6 1084.93,564.6 1085.05,560.6 1085.18,572.6 1085.31,568.6 1085.43,576.6 1085.56,572.6 1085.68,580.6 1085.81,560.6 1085.94,572.6 1086.06,580.6 1086.19,560.6 1086.32,572.6 1086.44,572.6 1086.57,580.6 1086.70,564.6 1086.82,576.6 1086.95,572.6 1087.08,568.6 1087.20,568.6 1087.33,564.6 1087.46,572.6 1087.58,564.6 1087.71,572.6 1087.84,576.6 1087.96,572.6 1088.09,564.6 1088.21,576.6 1088.34,576.6 1088.47,584.6 1088.59,580.6 1088.72,576.6 1088.85,592.6 1088.97,572.6 1089.10,572.6 1089.23,564.6 1089.35,568.6 1089.48,580.6 1089.61,576.6 1089.73,580.6 1089.86,580.6 1089.99,560.6 1090.11,572.6 1090.24,584.6 1090.37,584.6 1090.49,572.6 1090.62,572.6 1090.74,568.6 1090.87,568.6 1091.00,588.6 1091.12,568.6 1091.25,588.6 1091.38,580.6 1091.50,588.6 1091.63,572.6 1091.76,564.6 1091.88,580.6 1092.01,572.6 1092.14,584.6 1092.26,556.6 1092.39,552.6 1092.52,584.6 1092.64,584.6 1092.77,580.6 1092.89,580.6 1093.02,568.6 1093.15,556.6 1093.27,580.6 1093.40,572.6 1093.53,588.6 1093.65,592.6 1093.78,576.6 1093.91,564.6 1094.03,588.6 1094.16,564.6 1094.29,580.6 1094.41,568.6 1094.54,588.6 1094.67,592.6 1094.79,580.6 1094.92,596.6 1095.05,568.6 1095.17,576.6 1095.30,548.6 1095.42,576.6 1095.55,584.6 1095.68,580.6 1095.80,584.6 1095.93,572.6 1096.06,572.6 1096.18,600.6 1096.31,568.6 1096.44,576.6 1096.56,564.6 1096.69,580.6 1096.82,572.6 1096.94,580.6 1097.07,584.6 1097.20,556.6 1097.32,572.6 1097.45,576.6 1097.58,580.6 1097.70,584.6 1097.83,572.6 1097.95,580.6 1098.08,584.6 1098.21,576.6 1098.33,580.6 1098.46,564.6 1098.59,584.6 1098.71,592.6 1098.84,564.6 1098.97,576.6 1099.09,584.6 1099.22,564.6 1099.35,568.6 1099.47,592.6 1099.60,568.6 1099.73,564.6 1099.85,560.6 1099.98,572.6 1100.11,580.6 1100.23,576.6 1100.36,564.6 1100.49,580.6 1100.61,564.6 1100.74,584.6 1100.86,580.6 1100.99,572.6 1101.12,572.6 1101.24,568.6 1101.37,592.6 1101.50,564.6 1101.62,568.6 1101.75,568.6 1101.88,584.6 1102.00,564.6 1102.13,580.6 1102.26,584.6 1102.38,576.6 1102.51,588.6 1102.64,584.6 1102.76,572.6 1102.89,576.6 1103.02,584.6 1103.14,556.6 1103.27,580.6 1103.39,584.6 1103.52,580.6 1103.65,576.6 1103.77,576.6 1103.90,572.6 1104.03,572.6 1104.15,580.6 1104.28,584.6 1104.41,568.6 1104.53,576.6 1104.66,580.6 1104.79,568.6 1104.91,576.6 1105.04,584.6 1105.17,580.6 1105.29,568.6 1105.42,572.6 1105.55,576.6 1105.67,560.6 1105.80,576.6 1105.92,576.6 1106.05,572.6 1106.18,580.6 1106.30,584.6 1106.43,568.6 1106.56,572.6 1106.68,576.6 1106.81,576.6 1106.94,592.6 1107.06,568.6 1107.19,600.6 1107.32,568.6 1107.44,580.6 1107.57,584.6 1107.70,588.6 1107.82,572.6 1107.95,560.6 1108.08,564.6 1108.20,584.6 1108.33,576.6 1108.45,584.6 1108.58,572.6 1108.71,584.6 1108.83,580.6 1108.96,564.6 1109.09,584.6 1109.21,584.6 1109.34,568.6 1109.47,592.6 1109.59,596.6 1109.72,580.6 1109.85,584.6 1109.97,572.6 1110.10,568.6 1110.23,576.6 1110.35,564.6 1110.48,560.6 1110.61,580.6 1110.73,584.6 1110.86,572.6 1110.98,592.6 1111.11,588.6 1111.24,572.6 1111.36,564.6 1111.49,580.6 1111.62,568.6 1111.74,568.6 1111.87,584.6 1112.00,552.6 1112.12,584.6 1112.25,572.6 1112.38,576.6 1112.50,592.6 1112.63,564.6 1112.76,568.6 1112.88,564.6 1113.01,580.6 1113.13,580.6 1113.26,552.6 1113.39,564.6 1113.51,572.6 1113.64,572.6 1113.77,564.6 1113.89,592.6 1114.02,564.6 1114.15,564.6 1114.27,572.6 1114.40,576.6 1114.53,572.6 1114.65,568.6 1114.78,588.6 1114.91,584.6 1115.03,568.6 1115.16,580.6 1115.29,576.6 1115.41,576.6 1115.54,572.6 1115.66,560.6 1115.79,564.6 1115.92,576.6 1116.04,584.6 1116.17,556.6 1116.30,572.6 1116.42,568.6 1116.55,572.6 1116.68,568.6 1116.80,588.6 1116.93,592.6 1117.06,568.6 1117.18,564.6 1117.31,584.6 1117.44,572.6 1117.56,576.6 1117.69,592.6 1117.82,576.6 1117.94,568.6 1118.07,584.6 1118.19,580.6 1118.32,580.6 1118.45,576.6 1118.57,588.6 1118.70,564.6 1118.83,576.6 1118.95,568.6 1119.08,560.6 1119.21,580.6 1119.33,576.6 1119.46,564.6 1119.59,580.6 1119.71,572.6 1119.84,572.6 1119.97,576.6 1120.09,552.6 1120.22,576.6 1120.35,580.6 1120.47,580.6 1120.60,584.6 1120.72,592.6 1120.85,568.6 1120.98,580.6 1121.10,568.6 1121.23,560.6 1121.36,584.6 1121.48,568.6 1121.61,592.6 1121.74,560.6 1121.86,580.6 1121.99,576.6 1122.12,584.6 1122.24,584.6 1122.37,600.6 1122.50,592.6 1122.62,584.6 1122.75,572.6 1122.88,568.6 1123.00,592.6 1123.13,580.6 1123.26,584.6 1123.38,576.6 1123.51,564.6 1123.63,576.6 1123.76,560.6 1123.89,564.6 1124.01,592.6 1124.14,556.6 1124.27,560.6 1124.39,572.6 1124.52,584.6 1124.65,592.6 1124.77,564.6 1124.90,572.6 1125.03,584.6 1125.15,576.6 1125.28,564.6 1125.41,568.6 1125.53,596.6 1125.66,556.6 1125.79,576.6 1125.91,568.6 1126.04,580.6 1126.16,580.6 1126.29,572.6 1126.42,572.6 1126.54,564.6 1126.67,592.6 1126.80,572.6 1126.92,572.6 1127.05,576.6 1127.18,580.6 1127.30,568.6 1127.43,572.6 1127.56,576.6 1127.68,584.6 1127.81,576.6 1127.94,580.6 1128.06,584.6 1128.19,588.6 1128.32,580.6 1128.44,580.6 1128.57,584.6 1128.69,576.6 1128.82,580.6 1128.95,568.6 1129.07,572.6 1129.20,580.6 1129.33,588.6 1129.45,564.6 1129.58,560.6 1129.71,568.6 1129.83,564.6 1129.96,584.6 1130.09,568.6 1130.21,580.6 1130.34,572.6 1130.47,608.6 1130.59,588.6 1130.72,576.6 1130.85,560.6 1130.97,580.6 1131.10,588.6 1131.22,576.6 1131.35,580.6 1131.48,604.6 1131.60,588.6 1131.73,576.6 1131.86,580.6 1131.98,576.6 1132.11,568.6 1132.24,592.6 1132.36,588.6 1132.49,588.6 1132.62,572.6 1132.74,584.6 1132.87,584.6 1133.00,580.6 1133.12,588.6 1133.25,580.6 1133.38,584.6 1133.50,580.6 1133.63,576.6 1133.75,572.6 1133.88,588.6 1134.01,568.6 1134.13,584.6 1134.26,564.6 1134.39,584.6 1134.51,568.6 1134.64,572.6 1134.77,564.6 1134.89,576.6 1135.02,568.6 1135.15,588.6 1135.27,568.6 1135.40,584.6 1135.53,576.6 1135.65,592.6 1135.78,584.6 1135.90,576.6 1136.03,572.6 1136.16,568.6 1136.28,584.6 1136.41,588.6 1136.54,580.6 1136.66,584.6 1136.79,576.6 1136.92,568.6 1137.04,564.6 1137.17,588.6 1137.30,596.6 1137.42,596.6 1137.55,576.6 1137.68,604.6 1137.80,576.6 1137.93,572.6 1138.06,568.6 1138.18,576.6 1138.31,588.6 1138.43,596.6 1138.56,584.6 1138.69,576.6 1138.81,572.6 1138.94,564.6 1139.07,576.6 1139.19,568.6 1139.32,580.6 1139.45,588.6 1139.57,576.6 1139.70,596.6 1139.83,576.6 1139.95,568.6 1140.08,584.6 1140.21,596.6 1140.33,572.6 1140.46,584.6 1140.59,572.6 1140.71,592.6 1140.84,572.6 1140.96,576.6 1141.09,560.6 1141.22,580.6 1141.34,572.6 1141.47,584.6 1141.60,596.6 1141.72,552.6 1141.85,592.6 1141.98,552.6 1142.10,568.6 1142.23,560.6 1142.36,588.6 1142.48,560.6 1142.61,576.6 1142.74,568.6 1142.86,556.6 1142.99,576.6 1143.12,572.6 1143.24,588.6 1143.37,584.6 1143.49,588.6 1143.62,580.6 1143.75,560.6 1143.87,568.6 1144.00,564.6 1144.13,576.6 1144.25,568.6 1144.38,568.6 1144.51,584.6 1144.63,580.6 1144.76,576.6 1144.89,584.6 1145.01,568.6 1145.14,584.6 1145.27,580.6 1145.39,588.6 1145.52,576.6 1145.65,572.6 1145.77,580.6 1145.90,580.6 1146.03,588.6 1146.15,572.6 1146.28,576.6 1146.40,568.6 1146.53,596.6 1146.66,576.6 1146.78,572.6 1146.91,584.6 1147.04,588.6 1147.16,584.6 1147.29,580.6 1147.42,588.6 1147.54,572.6 1147.67,572.6 1147.80,576.6 1147.92,584.6 1148.05,580.6 1148.18,576.6 1148.30,584.6 1148.43,580.6 1148.56,576.6 1148.68,576.6 1148.81,576.6 1148.93,564.6 1149.06,576.6 1149.19,580.6 1149.31,584.6 1149.44,576.6 1149.57,588.6 1149.69,584.6 1149.82,568.6 1149.95,572.6 1150.07,564.6 1150.20,588.6 1150.33,568.6 1150.45,564.6 1150.58,580.6 1150.71,572.6 1150.83,588.6 1150.96,568.6 1151.09,588.6 1151.21,592.6 1151.34,580.6 1151.46,548.6 1151.59,584.6 1151.72,564.6 1151.84,584.6 1151.97,568.6 1152.10,584.6 1152.22,592.6 1152.35,576.6 1152.48,576.6 1152.60,580.6 1152.73,568.6 1152.86,600.6 1152.98,568.6 1153.11,580.6 1153.24,568.6 1153.36,584.6 1153.49,572.6 1153.62,588.6 1153.74,568.6 1153.87,564.6 1153.99,564.6 1154.12,588.6 1154.25,588.6 1154.37,580.6 1154.50,572.6 1154.63,576.6 1154.75,596.6 1154.88,564.6 1155.01,588.6 1155.13,572.6 1155.26,572.6 1155.39,576.6 1155.51,580.6 1155.64,580.6 1155.77,568.6 1155.89,576.6 1156.02,580.6 1156.14,580.6 1156.27,560.6 1156.40,568.6 1156.52,576.6 1156.65,576.6 1156.78,588.6 1156.90,576.6 1157.03,584.6 1157.16,576.6 1157.28,580.6 1157.41,588.6 1157.54,588.6 1157.66,568.6 1157.79,572.6 1157.92,588.6 1158.04,556.6 1158.17,568.6 1158.30,572.6 1158.42,572.6 1158.55,576.6 1158.67,572.6 1158.80,576.6 1158.93,588.6 1159.05,580.6 1159.18,580.6 1159.31,584.6 1159.43,596.6 1159.56,572.6 1159.69,564.6 1159.81,556.6 1159.94,572.6 1160.07,572.6 1160.19,572.6 1160.32,564.6 1160.45,580.6 1160.57,564.6 1160.70,568.6 1160.83,572.6 1160.95,572.6 1161.08,576.6 1161.20,584.6 1161.33,588.6 1161.46,580.6 1161.58,576.6 1161.71,576.6 1161.84,580.6 1161.96,580.6 1162.09,584.6 1162.22,572.6 1162.34,580.6 1162.47,576.6 1162.60,572.6 1162.72,564.6 1162.85,580.6 1162.98,580.6 1163.10,572.6 1163.23,568.6 1163.36,580.6 1163.48,568.6 1163.61,568.6 1163.74,588.6 1163.86,564.6 1163.99,560.6 1164.11,568.6 1164.24,572.6 1164.37,580.6 1164.49,584.6 1164.62,592.6 1164.75,576.6 1164.87,596.6 1165.00,592.6 1165.13,572.6 1165.25,584.6 1165.38,580.6 1165.51,568.6 1165.63,568.6 1165.76,584.6 1165.89,576.6 1166.01,580.6 1166.14,596.6 1166.27,584.6 1166.39,576.6 1166.52,592.6 1166.64,576.6 1166.77,580.6 1166.90,560.6 1167.02,584.6 1167.15,588.6 1167.28,580.6 1167.40,580.6 1167.53,588.6 1167.66,592.6 1167.78,584.6 1167.91,592.6 1168.04,568.6 1168.16,568.6 1168.29,580.6 1168.42,600.6 1168.54,572.6 1168.67,572.6 1168.80,576.6 1168.92,568.6 1169.05,584.6 1169.17,584.6 1169.30,564.6 1169.43,584.6 1169.55,584.6 1169.68,596.6 1169.81,576.6 1169.93,576.6 1170.06,588.6 1170.19,568.6 1170.31,580.6 1170.44,596.6 1170.57,572.6 1170.69,564.6 1170.82,572.6 1170.95,580.6 1171.07,564.6 1171.20,572.6 1171.33,576.6 1171.45,572.6 1171.58,588.6 1171.70,568.6 1171.83,588.6 1171.96,592.6 1172.08,576.6 1172.21,568.6 1172.34,572.6 1172.46,576.6 1172.59,580.6 1172.72,580.6 1172.84,576.6 1172.97,580.6 1173.10,572.6 1173.22,584.6 1173.35,564.6 1173.48,580.6 1173.60,576.6 1173.73,584.6 1173.86,584.6 1173.98,588.6 1174.11,588.6 1174.23,568.6 1174.36,596.6 1174.49,580.6 1174.61,556.6 1174.74,576.6 1174.87,580.6 1174.99,576.6 1175.12,596.6 1175.25,596.6 1175.37,576.6 1175.50,572.6 1175.63,576.6 1175.75,572.6 1175.88,584.6 1176.01,576.6 1176.13,560.6 1176.26,588.6 1176.38,568.6 1176.51,584.6 1176.64,592.6 1176.76,572.6 1176.89,588.6 1177.02,568.6 1177.14,564.6 1177.27,572.6 1177.40,584.6 1177.52,580.6 1177.65,572.6 1177.78,568.6 1177.90,552.6 1178.03,596.6 1178.16,580.6 1178.28,584.6 1178.41,588.6 1178.54,556.6 1178.66,576.6 1178.79,564.6 1178.91,576.6 1179.04,584.6 1179.17,568.6 1179.29,580.6 1179.42,560.6 1179.55,576.6 1179.67,612.6 1179.80,580.6 1179.93,560.6 1180.05,588.6 1180.18,568.6 1180.31,572.6 1180.43,564.6 1180.56,576.6 1180.69,580.6 1180.81,584.6 1180.94,580.6 1181.07,580.6 1181.19,572.6 1181.32,568.6 1181.44,576.6 1181.57,560.6 1181.70,576.6 1181.82,584.6 1181.95,572.6 1182.08,744.6 1182.20,744.6 1182.33,744.6 1182.46,744.6 1182.58,744.6 1182.71,744.6 1182.84,744.6 1182.96,744.6 1183.09,744.6"/>
<rect x="911.00" y="517.00" width="274.00" height="120.00" fill="none" stroke="#000" stroke-width="1.6"/>
<line x1="912.00" y1="637.00" x2="912.00" y2="644.00" stroke="#000" stroke-width="1.75"/>
<text x="912.00" y="660.20" font-size="10.18" text-anchor="middle" textLength="6.36" lengthAdjust="spacingAndGlyphs">0</text>
<line x1="975.25" y1="637.00" x2="975.25" y2="644.00" stroke="#000" stroke-width="1.75"/>
<text x="975.25" y="660.20" font-size="10.18" text-anchor="middle" textLength="19.08" lengthAdjust="spacingAndGlyphs">500</text>
<line x1="1038.50" y1="637.00" x2="1038.50" y2="644.00" stroke="#000" stroke-width="1.75"/>
<text x="1038.50" y="660.20" font-size="10.18" text-anchor="middle" textLength="25.44" lengthAdjust="spacingAndGlyphs">1000</text>
<line x1="1101.75" y1="637.00" x2="1101.75" y2="644.00" stroke="#000" stroke-width="1.75"/>
<text x="1101.75" y="660.20" font-size="10.18" text-anchor="middle" textLength="25.44" lengthAdjust="spacingAndGlyphs">1500</text>
<line x1="1165.00" y1="637.00" x2="1165.00" y2="644.00" stroke="#000" stroke-width="1.75"/>
<text x="1165.00" y="660.20" font-size="10.18" text-anchor="middle" textLength="25.44" lengthAdjust="spacingAndGlyphs">2000</text>
<line x1="904.00" y1="624.60" x2="911.00" y2="624.60" stroke="#000" stroke-width="1.75"/>
<text x="896.00" y="628.50" font-size="10.18" text-anchor="end" textLength="19.08" lengthAdjust="spacingAndGlyphs">990</text>
<line x1="904.00" y1="584.60" x2="911.00" y2="584.60" stroke="#000" stroke-width="1.75"/>
<text x="896.00" y="588.50" font-size="10.18" text-anchor="end" textLength="25.44" lengthAdjust="spacingAndGlyphs">1000</text>
<line x1="904.00" y1="544.60" x2="911.00" y2="544.60" stroke="#000" stroke-width="1.75"/>
<text x="896.00" y="548.50" font-size="10.18" text-anchor="end" textLength="25.44" lengthAdjust="spacingAndGlyphs">1010</text>
<text x="1047.50" y="678.20" font-size="10.61" text-anchor="middle" textLength="7.12" lengthAdjust="spacingAndGlyphs">X</text>
<text x="858.60" y="578.10" font-size="10.61" text-anchor="middle" textLength="34.77" lengthAdjust="spacingAndGlyphs" transform="rotate(-90 858.60 578.10)">counts</text>
<text x="1194.30" y="575.50" font-size="10.61" text-anchor="middle" textLength="38.66" lengthAdjust="spacingAndGlyphs" transform="rotate(90 1194.30 575.50)">cut in x</text>
<rect x="1109" y="520.0" width="73" height="16" rx="2" fill="#fff" fill-opacity="0.8" stroke="#d6d6d6" stroke-width="1"/>
<line x1="1111.20" y1="528.00" x2="1133.60" y2="528.00" stroke="#0000ff" stroke-width="1.9"/>
<text x="1138.00" y="531.00" font-size="10.18" text-anchor="start" textLength="39.73" lengthAdjust="spacingAndGlyphs">y=1500</text>
<clipPath id="cY"><rect x="911" y="689" width="274" height="120"/></clipPath>
<polyline clip-path="url(#cY)" fill="none" stroke="#0000ff" stroke-width="1.75" stroke-linejoin="miter" points="912.00,720.6 912.09,736.6 912.18,732.6 912.27,748.6 912.36,748.6 912.45,748.6 912.54,744.6 912.63,764.6 912.73,736.6 912.82,768.6 912.91,760.6 913.00,760.6 913.09,756.6 913.18,740.6 913.27,756.6 913.36,752.6 913.45,760.6 913.54,764.6 913.63,768.6 913.72,740.6 913.81,748.6 913.90,756.6 913.99,740.6 914.09,744.6 914.18,760.6 914.27,756.6 914.36,740.6 914.45,736.6 914.54,752.6 914.63,740.6 914.72,736.6 914.81,736.6 914.90,748.6 914.99,740.6 915.08,740.6 915.17,752.6 915.26,748.6 915.35,752.6 915.45,764.6 915.54,748.6 915.63,752.6 915.72,760.6 915.81,744.6 915.90,736.6 915.99,740.6 916.08,752.6 916.17,760.6 916.26,740.6 916.35,756.6 916.44,736.6 916.53,752.6 916.62,744.6 916.71,752.6 916.81,748.6 916.90,740.6 916.99,744.6 917.08,756.6 917.17,732.6 917.26,740.6 917.35,744.6 917.44,760.6 917.53,756.6 917.62,756.6 917.71,756.6 917.80,740.6 917.89,748.6 917.98,752.6 918.07,748.6 918.17,748.6 918.26,760.6 918.35,744.6 918.44,748.6 918.53,756.6 918.62,748.6 918.71,768.6 918.80,736.6 918.89,748.6 918.98,744.6 919.07,756.6 919.16,744.6 919.25,748.6 919.34,764.6 919.43,748.6 919.53,728.6 919.62,748.6 919.71,744.6 919.80,740.6 919.89,736.6 919.98,744.6 920.07,764.6 920.16,744.6 920.25,740.6 920.34,744.6 920.43,760.6 920.52,748.6 920.61,752.6 920.70,748.6 920.79,752.6 920.89,736.6 920.98,744.6 921.07,756.6 921.16,760.6 921.25,756.6 921.34,748.6 921.43,760.6 921.52,752.6 921.61,740.6 921.70,748.6 921.79,760.6 921.88,736.6 921.97,720.6 922.06,752.6 922.15,756.6 922.25,752.6 922.34,736.6 922.43,760.6 922.52,740.6 922.61,748.6 922.70,736.6 922.79,748.6 922.88,752.6 922.97,752.6 923.06,744.6 923.15,752.6 923.24,756.6 923.33,768.6 923.42,744.6 923.51,756.6 923.61,728.6 923.70,752.6 923.79,732.6 923.88,748.6 923.97,740.6 924.06,752.6 924.15,748.6 924.24,740.6 924.33,756.6 924.42,748.6 924.51,732.6 924.60,760.6 924.69,752.6 924.78,740.6 924.87,744.6 924.97,744.6 925.06,748.6 925.15,740.6 925.24,748.6 925.33,752.6 925.42,764.6 925.51,756.6 925.60,748.6 925.69,732.6 925.78,748.6 925.87,728.6 925.96,756.6 926.05,748.6 926.14,736.6 926.23,752.6 926.33,752.6 926.42,744.6 926.51,740.6 926.60,744.6 926.69,728.6 926.78,744.6 926.87,732.6 926.96,760.6 927.05,756.6 927.14,748.6 927.23,748.6 927.32,744.6 927.41,752.6 927.50,740.6 927.59,756.6 927.69,748.6 927.78,760.6 927.87,748.6 927.96,740.6 928.05,736.6 928.14,736.6 928.23,756.6 928.32,756.6 928.41,748.6 928.50,748.6 928.59,756.6 928.68,744.6 928.77,756.6 928.86,740.6 928.95,732.6 929.05,748.6 929.14,740.6 929.23,752.6 929.32,756.6 929.41,764.6 929.50,736.6 929.59,728.6 929.68,772.6 929.77,756.6 929.86,752.6 929.95,756.6 930.04,752.6 930.13,740.6 930.22,748.6 930.31,740.6 930.41,764.6 930.50,752.6 930.59,732.6 930.68,756.6 930.77,764.6 930.86,752.6 930.95,748.6 931.04,772.6 931.13,744.6 931.22,740.6 931.31,752.6 931.40,748.6 931.49,748.6 931.58,752.6 931.67,760.6 931.77,756.6 931.86,744.6 931.95,740.6 932.04,744.6 932.13,756.6 932.22,744.6 932.31,740.6 932.40,736.6 932.49,740.6 932.58,748.6 932.67,748.6 932.76,740.6 932.85,740.6 932.94,772.6 933.03,756.6 933.13,748.6 933.22,740.6 933.31,764.6 933.40,760.6 933.49,768.6 933.58,736.6 933.67,740.6 933.76,752.6 933.85,724.6 933.94,728.6 934.03,740.6 934.12,744.6 934.21,748.6 934.30,740.6 934.39,756.6 934.49,740.6 934.58,756.6 934.67,740.6 934.76,748.6 934.85,744.6 934.94,736.6 935.03,740.6 935.12,748.6 935.21,752.6 935.30,756.6 935.39,756.6 935.48,740.6 935.57,748.6 935.66,760.6 935.75,736.6 935.85,756.6 935.94,736.6 936.03,744.6 936.12,740.6 936.21,748.6 936.30,760.6 936.39,752.6 936.48,752.6 936.57,756.6 936.66,744.6 936.75,760.6 936.84,760.6 936.93,756.6 937.02,760.6 937.11,748.6 937.21,744.6 937.30,748.6 937.39,752.6 937.48,740.6 937.57,744.6 937.66,732.6 937.75,752.6 937.84,744.6 937.93,752.6 938.02,752.6 938.11,752.6 938.20,740.6 938.29,752.6 938.38,760.6 938.47,732.6 938.57,748.6 938.66,744.6 938.75,740.6 938.84,736.6 938.93,740.6 939.02,756.6 939.11,752.6 939.20,736.6 939.29,748.6 939.38,736.6 939.47,736.6 939.56,760.6 939.65,748.6 939.74,756.6 939.83,756.6 939.93,752.6 940.02,748.6 940.11,744.6 940.20,760.6 940.29,748.6 940.38,752.6 940.47,756.6 940.56,748.6 940.65,764.6 940.74,752.6 940.83,748.6 940.92,732.6 941.01,748.6 941.10,752.6 941.19,740.6 941.29,760.6 941.38,752.6 941.47,728.6 941.56,736.6 941.65,744.6 941.74,740.6 941.83,760.6 941.92,740.6 942.01,752.6 942.10,744.6 942.19,748.6 942.28,744.6 942.37,752.6 942.46,768.6 942.55,772.6 942.65,768.6 942.74,748.6 942.83,756.6 942.92,764.6 943.01,736.6 943.10,748.6 943.19,756.6 943.28,760.6 943.37,744.6 943.46,752.6 943.55,760.6 943.64,752.6 943.73,768.6 943.82,736.6 943.91,752.6 944.01,748.6 944.10,760.6 944.19,760.6 944.28,752.6 944.37,760.6 944.46,768.6 944.55,744.6 944.64,752.6 944.73,764.6 944.82,748.6 944.91,752.6 945.00,756.6 945.09,768.6 945.18,752.6 945.27,772.6 945.37,760.6 945.46,736.6 945.55,748.6 945.64,764.6 945.73,760.6 945.82,748.6 945.91,740.6 946.00,752.6 946.09,752.6 946.18,744.6 946.27,736.6 946.36,764.6 946.45,756.6 946.54,740.6 946.63,744.6 946.73,760.6 946.82,772.6 946.91,736.6 947.00,752.6 947.09,748.6 947.18,756.6 947.27,740.6 947.36,740.6 947.45,736.6 947.54,764.6 947.63,752.6 947.72,744.6 947.81,752.6 947.90,752.6 947.99,732.6 948.09,748.6 948.18,764.6 948.27,732.6 948.36,744.6 948.45,748.6 948.54,744.6 948.63,744.6 948.72,748.6 948.81,740.6 948.90,752.6 948.99,740.6 949.08,728.6 949.17,752.6 949.26,772.6 949.35,732.6 949.45,744.6 949.54,756.6 949.63,744.6 949.72,764.6 949.81,740.6 949.90,772.6 949.99,744.6 950.08,736.6 950.17,752.6 950.26,744.6 950.35,744.6 950.44,768.6 950.53,752.6 950.62,732.6 950.71,748.6 950.81,728.6 950.90,748.6 950.99,752.6 951.08,752.6 951.17,756.6 951.26,772.6 951.35,748.6 951.44,736.6 951.53,756.6 951.62,756.6 951.71,756.6 951.80,736.6 951.89,736.6 951.98,756.6 952.07,740.6 952.17,736.6 952.26,748.6 952.35,752.6 952.44,740.6 952.53,756.6 952.62,748.6 952.71,740.6 952.80,732.6 952.89,740.6 952.98,744.6 953.07,756.6 953.16,740.6 953.25,748.6 953.34,728.6 953.43,748.6 953.53,748.6 953.62,756.6 953.71,748.6 953.80,744.6 953.89,760.6 953.98,752.6 954.07,760.6 954.16,764.6 954.25,744.6 954.34,756.6 954.43,752.6 954.52,744.6 954.61,756.6 954.70,752.6 954.79,752.6 954.89,756.6 954.98,756.6 955.07,736.6 955.16,744.6 955.25,744.6 955.34,760.6 955.43,752.6 955.52,740.6 955.61,740.6 955.70,756.6 955.79,744.6 955.88,736.6 955.97,740.6 956.06,752.6 956.15,756.6 956.25,768.6 956.34,752.6 956.43,748.6 956.52,748.6 956.61,752.6 956.70,740.6 956.79,736.6 956.88,760.6 956.97,748.6 957.06,748.6 957.15,748.6 957.24,752.6 957.33,744.6 957.42,736.6 957.51,752.6 957.61,752.6 957.70,736.6 957.79,760.6 957.88,744.6 957.97,748.6 958.06,756.6 958.15,748.6 958.24,752.6 958.33,744.6 958.42,744.6 958.51,752.6 958.60,748.6 958.69,748.6 958.78,744.6 958.87,768.6 958.97,752.6 959.06,744.6 959.15,752.6 959.24,736.6 959.33,752.6 959.42,752.6 959.51,748.6 959.60,764.6 959.69,728.6 959.78,760.6 959.87,748.6 959.96,772.6 960.05,748.6 960.14,756.6 960.23,740.6 960.33,748.6 960.42,736.6 960.51,752.6 960.60,748.6 960.69,752.6 960.78,748.6 960.87,756.6 960.96,752.6 961.05,736.6 961.14,740.6 961.23,760.6 961.32,748.6 961.41,748.6 961.50,760.6 961.59,744.6 961.69,756.6 961.78,744.6 961.87,740.6 961.96,756.6 962.05,744.6 962.14,740.6 962.23,756.6 962.32,744.6 962.41,732.6 962.50,736.6 962.59,756.6 962.68,772.6 962.77,752.6 962.86,760.6 962.95,736.6 963.05,756.6 963.14,732.6 963.23,760.6 963.32,756.6 963.41,748.6 963.50,760.6 963.59,732.6 963.68,756.6 963.77,744.6 963.86,744.6 963.95,732.6 964.04,728.6 964.13,748.6 964.22,744.6 964.31,744.6 964.41,748.6 964.50,736.6 964.59,764.6 964.68,756.6 964.77,764.6 964.86,748.6 964.95,736.6 965.04,744.6 965.13,752.6 965.22,748.6 965.31,736.6 965.40,752.6 965.49,756.6 965.58,748.6 965.67,768.6 965.77,752.6 965.86,748.6 965.95,752.6 966.04,756.6 966.13,728.6 966.22,736.6 966.31,740.6 966.40,736.6 966.49,760.6 966.58,748.6 966.67,752.6 966.76,748.6 966.85,740.6 966.94,748.6 967.03,732.6 967.13,748.6 967.22,748.6 967.31,740.6 967.40,744.6 967.49,760.6 967.58,744.6 967.67,756.6 967.76,732.6 967.85,728.6 967.94,756.6 968.03,740.6 968.12,752.6 968.21,768.6 968.30,740.6 968.39,736.6 968.49,728.6 968.58,744.6 968.67,756.6 968.76,736.6 968.85,748.6 968.94,744.6 969.03,740.6 969.12,756.6 969.21,740.6 969.30,748.6 969.39,764.6 969.48,744.6 969.57,764.6 969.66,756.6 969.75,744.6 969.85,756.6 969.94,740.6 970.03,760.6 970.12,748.6 970.21,740.6 970.30,752.6 970.39,756.6 970.48,752.6 970.57,760.6 970.66,752.6 970.75,752.6 970.84,756.6 970.93,740.6 971.02,740.6 971.11,748.6 971.21,740.6 971.30,736.6 971.39,756.6 971.48,724.6 971.57,756.6 971.66,748.6 971.75,740.6 971.84,760.6 971.93,748.6 972.02,752.6 972.11,744.6 972.20,732.6 972.29,756.6 972.38,756.6 972.47,752.6 972.57,760.6 972.66,756.6 972.75,760.6 972.84,736.6 972.93,748.6 973.02,740.6 973.11,740.6 973.20,760.6 973.29,744.6 973.38,740.6 973.47,752.6 973.56,748.6 973.65,748.6 973.74,760.6 973.83,752.6 973.93,740.6 974.02,744.6 974.11,740.6 974.20,760.6 974.29,752.6 974.38,740.6 974.47,764.6 974.56,748.6 974.65,760.6 974.74,748.6 974.83,736.6 974.92,736.6 975.01,760.6 975.10,748.6 975.19,768.6 975.29,744.6 975.38,756.6 975.47,724.6 975.56,764.6 975.65,760.6 975.74,756.6 975.83,740.6 975.92,764.6 976.01,740.6 976.10,756.6 976.19,740.6 976.28,756.6 976.37,760.6 976.46,744.6 976.55,748.6 976.65,748.6 976.74,744.6 976.83,728.6 976.92,728.6 977.01,744.6 977.10,736.6 977.19,752.6 977.28,732.6 977.37,764.6 977.46,760.6 977.55,736.6 977.64,744.6 977.73,740.6 977.82,744.6 977.91,740.6 978.01,732.6 978.10,752.6 978.19,752.6 978.28,744.6 978.37,732.6 978.46,768.6 978.55,744.6 978.64,748.6 978.73,744.6 978.82,756.6 978.91,744.6 979.00,736.6 979.09,756.6 979.18,728.6 979.27,744.6 979.37,740.6 979.46,740.6 979.55,736.6 979.64,760.6 979.73,748.6 979.82,736.6 979.91,756.6 980.00,768.6 980.09,748.6 980.18,768.6 980.27,760.6 980.36,756.6 980.45,760.6 980.54,752.6 980.63,748.6 980.73,764.6 980.82,760.6 980.91,748.6 981.00,772.6 981.09,748.6 981.18,728.6 981.27,748.6 981.36,748.6 981.45,740.6 981.54,748.6 981.63,744.6 981.72,732.6 981.81,768.6 981.90,748.6 981.99,752.6 982.09,744.6 982.18,748.6 982.27,740.6 982.36,744.6 982.45,772.6 982.54,760.6 982.63,752.6 982.72,764.6 982.81,756.6 982.90,740.6 982.99,764.6 983.08,760.6 983.17,744.6 983.26,752.6 983.35,748.6 983.45,732.6 983.54,740.6 983.63,752.6 983.72,744.6 983.81,744.6 983.90,748.6 983.99,760.6 984.08,744.6 984.17,732.6 984.26,756.6 984.35,760.6 984.44,740.6 984.53,744.6 984.62,748.6 984.71,760.6 984.81,744.6 984.90,756.6 984.99,768.6 985.08,756.6 985.17,740.6 985.26,744.6 985.35,740.6 985.44,740.6 985.53,732.6 985.62,760.6 985.71,760.6 985.80,736.6 985.89,744.6 985.98,752.6 986.07,752.6 986.17,752.6 986.26,748.6 986.35,756.6 986.44,760.6 986.53,748.6 986.62,752.6 986.71,756.6 986.80,752.6 986.89,744.6 986.98,720.6 987.07,764.6 987.16,752.6 987.25,768.6 987.34,748.6 987.43,744.6 987.53,740.6 987.62,748.6 987.71,752.6 987.80,740.6 987.89,740.6 987.98,768.6 988.07,752.6 988.16,752.6 988.25,752.6 988.34,756.6 988.43,732.6 988.52,744.6 988.61,740.6 988.70,752.6 988.79,736.6 988.89,748.6 988.98,752.6 989.07,768.6 989.16,740.6 989.25,760.6 989.34,764.6 989.43,740.6 989.52,756.6 989.61,748.6 989.70,740.6 989.79,768.6 989.88,752.6 989.97,752.6 990.06,732.6 990.15,748.6 990.25,740.6 990.34,740.6 990.43,744.6 990.52,744.6 990.61,756.6 990.70,752.6 990.79,752.6 990.88,752.6 990.97,736.6 991.06,740.6 991.15,748.6 991.24,748.6 991.33,752.6 991.42,744.6 991.51,760.6 991.61,748.6 991.70,740.6 991.79,756.6 991.88,760.6 991.97,760.6 992.06,732.6 992.15,772.6 992.24,756.6 992.33,756.6 992.42,740.6 992.51,744.6 992.60,756.6 992.69,748.6 992.78,764.6 992.87,756.6 992.97,760.6 993.06,744.6 993.15,752.6 993.24,728.6 993.33,752.6 993.42,748.6 993.51,748.6 993.60,728.6 993.69,748.6 993.78,764.6 993.87,768.6 993.96,744.6 994.05,740.6 994.14,752.6 994.23,744.6 994.33,740.6 994.42,732.6 994.51,760.6 994.60,748.6 994.69,760.6 994.78,740.6 994.87,752.6 994.96,756.6 995.05,740.6 995.14,744.6 995.23,748.6 995.32,744.6 995.41,768.6 995.50,760.6 995.59,752.6 995.69,748.6 995.78,732.6 995.87,732.6 995.96,740.6 996.05,748.6 996.14,756.6 996.23,744.6 996.32,756.6 996.41,768.6 996.50,760.6 996.59,756.6 996.68,728.6 996.77,748.6 996.86,752.6 996.95,748.6 997.05,756.6 997.14,732.6 997.23,744.6 997.32,732.6 997.41,760.6 997.50,756.6 997.59,732.6 997.68,760.6 997.77,752.6 997.86,744.6 997.95,752.6 998.04,764.6 998.13,748.6 998.22,736.6 998.31,744.6 998.41,752.6 998.50,728.6 998.59,736.6 998.68,740.6 998.77,748.6 998.86,736.6 998.95,748.6 999.04,752.6 999.13,756.6 999.22,740.6 999.31,740.6 999.40,744.6 999.49,736.6 999.58,756.6 999.67,744.6 999.77,744.6 999.86,756.6 999.95,752.6 1000.04,748.6 1000.13,744.6 1000.22,752.6 1000.31,764.6 1000.40,776.6 1000.49,744.6 1000.58,732.6 1000.67,728.6 1000.76,740.6 1000.85,756.6 1000.94,760.6 1001.03,740.6 1001.13,744.6 1001.22,756.6 1001.31,752.6 1001.40,748.6 1001.49,760.6 1001.58,744.6 1001.67,728.6 1001.76,752.6 1001.85,752.6 1001.94,756.6 1002.03,736.6 1002.12,756.6 1002.21,756.6 1002.30,748.6 1002.39,752.6 1002.49,748.6 1002.58,744.6 1002.67,756.6 1002.76,764.6 1002.85,752.6 1002.94,760.6 1003.03,756.6 1003.12,736.6 1003.21,752.6 1003.30,744.6 1003.39,744.6 1003.48,752.6 1003.57,752.6 1003.66,732.6 1003.76,744.6 1003.85,752.6 1003.94,748.6 1004.03,756.6 1004.12,744.6 1004.21,752.6 1004.30,740.6 1004.39,748.6 1004.48,748.6 1004.57,728.6 1004.66,752.6 1004.75,744.6 1004.84,756.6 1004.93,724.6 1005.02,760.6 1005.12,752.6 1005.21,752.6 1005.30,748.6 1005.39,764.6 1005.48,756.6 1005.57,740.6 1005.66,748.6 1005.75,736.6 1005.84,752.6 1005.93,748.6 1006.02,736.6 1006.11,752.6 1006.20,748.6 1006.29,740.6 1006.38,752.6 1006.48,756.6 1006.57,744.6 1006.66,744.6 1006.75,756.6 1006.84,752.6 1006.93,740.6 1007.02,728.6 1007.11,752.6 1007.20,728.6 1007.29,740.6 1007.38,752.6 1007.47,752.6 1007.56,756.6 1007.65,736.6 1007.74,732.6 1007.84,756.6 1007.93,756.6 1008.02,740.6 1008.11,748.6 1008.20,760.6 1008.29,752.6 1008.38,748.6 1008.47,744.6 1008.56,744.6 1008.65,744.6 1008.74,732.6 1008.83,760.6 1008.92,752.6 1009.01,752.6 1009.10,752.6 1009.20,740.6 1009.29,736.6 1009.38,740.6 1009.47,748.6 1009.56,756.6 1009.65,748.6 1009.74,724.6 1009.83,736.6 1009.92,744.6 1010.01,764.6 1010.10,752.6 1010.19,752.6 1010.28,768.6 1010.37,724.6 1010.46,764.6 1010.56,744.6 1010.65,732.6 1010.74,752.6 1010.83,740.6 1010.92,728.6 1011.01,748.6 1011.10,756.6 1011.19,740.6 1011.28,744.6 1011.37,756.6 1011.46,744.6 1011.55,756.6 1011.64,740.6 1011.73,744.6 1011.82,728.6 1011.92,764.6 1012.01,768.6 1012.10,752.6 1012.19,752.6 1012.28,740.6 1012.37,744.6 1012.46,768.6 1012.55,756.6 1012.64,740.6 1012.73,768.6 1012.82,748.6 1012.91,760.6 1013.00,752.6 1013.09,744.6 1013.18,732.6 1013.28,748.6 1013.37,752.6 1013.46,752.6 1013.55,748.6 1013.64,748.6 1013.73,756.6 1013.82,748.6 1013.91,744.6 1014.00,752.6 1014.09,760.6 1014.18,748.6 1014.27,752.6 1014.36,752.6 1014.45,756.6 1014.54,752.6 1014.64,752.6 1014.73,744.6 1014.82,744.6 1014.91,760.6 1015.00,736.6 1015.09,748.6 1015.18,744.6 1015.27,752.6 1015.36,740.6 1015.45,760.6 1015.54,748.6 1015.63,764.6 1015.72,736.6 1015.81,744.6 1015.90,740.6 1016.00,760.6 1016.09,748.6 1016.18,760.6 1016.27,760.6 1016.36,736.6 1016.45,736.6 1016.54,732.6 1016.63,744.6 1016.72,760.6 1016.81,760.6 1016.90,756.6 1016.99,744.6 1017.08,748.6 1017.17,744.6 1017.26,756.6 1017.36,764.6 1017.45,740.6 1017.54,748.6 1017.63,752.6 1017.72,752.6 1017.81,744.6 1017.90,756.6 1017.99,744.6 1018.08,760.6 1018.17,736.6 1018.26,760.6 1018.35,744.6 1018.44,744.6 1018.53,740.6 1018.62,760.6 1018.72,744.6 1018.81,764.6 1018.90,740.6 1018.99,752.6 1019.08,744.6 1019.17,752.6 1019.26,736.6 1019.35,740.6 1019.44,760.6 1019.53,744.6 1019.62,724.6 1019.71,736.6 1019.80,756.6 1019.89,768.6 1019.98,752.6 1020.08,756.6 1020.17,760.6 1020.26,736.6 1020.35,744.6 1020.44,744.6 1020.53,756.6 1020.62,740.6 1020.71,752.6 1020.80,764.6 1020.89,740.6 1020.98,756.6 1021.07,744.6 1021.16,752.6 1021.25,752.6 1021.34,736.6 1021.44,740.6 1021.53,752.6 1021.62,748.6 1021.71,748.6 1021.80,748.6 1021.89,736.6 1021.98,764.6 1022.07,740.6 1022.16,744.6 1022.25,748.6 1022.34,732.6 1022.43,760.6 1022.52,748.6 1022.61,740.6 1022.70,756.6 1022.80,764.6 1022.89,756.6 1022.98,748.6 1023.07,732.6 1023.16,736.6 1023.25,752.6 1023.34,740.6 1023.43,752.6 1023.52,752.6 1023.61,736.6 1023.70,736.6 1023.79,744.6 1023.88,736.6 1023.97,740.6 1024.06,748.6 1024.16,748.6 1024.25,748.6 1024.34,748.6 1024.43,752.6 1024.52,740.6 1024.61,744.6 1024.70,748.6 1024.79,756.6 1024.88,756.6 1024.97,752.6 1025.06,756.6 1025.15,752.6 1025.24,760.6 1025.33,748.6 1025.42,756.6 1025.52,752.6 1025.61,748.6 1025.70,752.6 1025.79,736.6 1025.88,736.6 1025.97,768.6 1026.06,748.6 1026.15,756.6 1026.24,760.6 1026.33,740.6 1026.42,728.6 1026.51,764.6 1026.60,756.6 1026.69,740.6 1026.78,748.6 1026.88,760.6 1026.97,744.6 1027.06,756.6 1027.15,744.6 1027.24,740.6 1027.33,764.6 1027.42,752.6 1027.51,768.6 1027.60,728.6 1027.69,740.6 1027.78,740.6 1027.87,748.6 1027.96,744.6 1028.05,732.6 1028.14,764.6 1028.24,736.6 1028.33,752.6 1028.42,744.6 1028.51,748.6 1028.60,748.6 1028.69,724.6 1028.78,760.6 1028.87,728.6 1028.96,752.6 1029.05,744.6 1029.14,744.6 1029.23,764.6 1029.32,760.6 1029.41,756.6 1029.50,748.6 1029.60,752.6 1029.69,752.6 1029.78,740.6 1029.87,740.6 1029.96,740.6 1030.05,752.6 1030.14,748.6 1030.23,744.6 1030.32,752.6 1030.41,752.6 1030.50,744.6 1030.59,748.6 1030.68,756.6 1030.77,732.6 1030.86,740.6 1030.96,760.6 1031.05,736.6 1031.14,752.6 1031.23,768.6 1031.32,760.6 1031.41,732.6 1031.50,768.6 1031.59,752.6 1031.68,748.6 1031.77,744.6 1031.86,764.6 1031.95,764.6 1032.04,752.6 1032.13,736.6 1032.22,752.6 1032.32,748.6 1032.41,760.6 1032.50,760.6 1032.59,748.6 1032.68,748.6 1032.77,752.6 1032.86,740.6 1032.95,752.6 1033.04,752.6 1033.13,728.6 1033.22,740.6 1033.31,756.6 1033.40,752.6 1033.49,748.6 1033.58,752.6 1033.68,756.6 1033.77,764.6 1033.86,756.6 1033.95,740.6 1034.04,744.6 1034.13,752.6 1034.22,756.6 1034.31,756.6 1034.40,764.6 1034.49,748.6 1034.58,760.6 1034.67,756.6 1034.76,748.6 1034.85,732.6 1034.94,756.6 1035.04,744.6 1035.13,740.6 1035.22,732.6 1035.31,732.6 1035.40,756.6 1035.49,740.6 1035.58,772.6 1035.67,736.6 1035.76,752.6 1035.85,748.6 1035.94,752.6 1036.03,744.6 1036.12,748.6 1036.21,764.6 1036.30,764.6 1036.40,768.6 1036.49,744.6 1036.58,744.6 1036.67,732.6 1036.76,752.6 1036.85,752.6 1036.94,752.6 1037.03,732.6 1037.12,764.6 1037.21,752.6 1037.30,768.6 1037.39,748.6 1037.48,760.6 1037.57,756.6 1037.66,740.6 1037.76,764.6 1037.85,768.6 1037.94,772.6 1038.03,760.6 1038.12,764.6 1038.21,768.6 1038.30,752.6 1038.39,756.6 1038.48,740.6 1038.57,756.6 1038.66,768.6 1038.75,736.6 1038.84,764.6 1038.93,760.6 1039.02,764.6 1039.12,744.6 1039.21,748.6 1039.30,748.6 1039.39,740.6 1039.48,768.6 1039.57,744.6 1039.66,736.6 1039.75,756.6 1039.84,740.6 1039.93,744.6 1040.02,756.6 1040.11,768.6 1040.20,736.6 1040.29,732.6 1040.38,744.6 1040.48,764.6 1040.57,768.6 1040.66,776.6 1040.75,748.6 1040.84,760.6 1040.93,736.6 1041.02,748.6 1041.11,736.6 1041.20,752.6 1041.29,744.6 1041.38,764.6 1041.47,744.6 1041.56,748.6 1041.65,744.6 1041.74,752.6 1041.84,760.6 1041.93,744.6 1042.02,744.6 1042.11,752.6 1042.20,756.6 1042.29,732.6 1042.38,764.6 1042.47,740.6 1042.56,740.6 1042.65,736.6 1042.74,772.6 1042.83,748.6 1042.92,756.6 1043.01,744.6 1043.10,752.6 1043.20,740.6 1043.29,752.6 1043.38,752.6 1043.47,752.6 1043.56,736.6 1043.65,744.6 1043.74,752.6 1043.83,736.6 1043.92,728.6 1044.01,752.6 1044.10,756.6 1044.19,740.6 1044.28,744.6 1044.37,748.6 1044.46,744.6 1044.56,752.6 1044.65,740.6 1044.74,752.6 1044.83,776.6 1044.92,748.6 1045.01,740.6 1045.10,748.6 1045.19,740.6 1045.28,752.6 1045.37,760.6 1045.46,744.6 1045.55,740.6 1045.64,756.6 1045.73,740.6 1045.82,748.6 1045.92,768.6 1046.01,744.6 1046.10,760.6 1046.19,748.6 1046.28,776.6 1046.37,736.6 1046.46,752.6 1046.55,744.6 1046.64,752.6 1046.73,760.6 1046.82,748.6 1046.91,760.6 1047.00,744.6 1047.09,740.6 1047.18,752.6 1047.28,764.6 1047.37,736.6 1047.46,760.6 1047.55,748.6 1047.64,748.6 1047.73,748.6 1047.82,764.6 1047.91,740.6 1048.00,756.6 1048.09,748.6 1048.18,736.6 1048.27,740.6 1048.36,752.6 1048.45,752.6 1048.54,736.6 1048.64,748.6 1048.73,764.6 1048.82,752.6 1048.91,752.6 1049.00,748.6 1049.09,752.6 1049.18,756.6 1049.27,752.6 1049.36,764.6 1049.45,744.6 1049.54,756.6 1049.63,756.6 1049.72,744.6 1049.81,756.6 1049.90,744.6 1050.00,740.6 1050.09,744.6 1050.18,756.6 1050.27,744.6 1050.36,756.6 1050.45,752.6 1050.54,752.6 1050.63,752.6 1050.72,760.6 1050.81,756.6 1050.90,732.6 1050.99,756.6 1051.08,740.6 1051.17,756.6 1051.26,752.6 1051.36,748.6 1051.45,760.6 1051.54,748.6 1051.63,740.6 1051.72,744.6 1051.81,760.6 1051.90,748.6 1051.99,744.6 1052.08,748.6 1052.17,756.6 1052.26,748.6 1052.35,752.6 1052.44,740.6 1052.53,732.6 1052.62,760.6 1052.72,744.6 1052.81,740.6 1052.90,760.6 1052.99,756.6 1053.08,756.6 1053.17,752.6 1053.26,752.6 1053.35,760.6 1053.44,768.6 1053.53,744.6 1053.62,752.6 1053.71,728.6 1053.80,752.6 1053.89,764.6 1053.98,752.6 1054.08,740.6 1054.17,752.6 1054.26,760.6 1054.35,744.6 1054.44,744.6 1054.53,748.6 1054.62,752.6 1054.71,752.6 1054.80,748.6 1054.89,752.6 1054.98,756.6 1055.07,756.6 1055.16,756.6 1055.25,748.6 1055.34,752.6 1055.44,732.6 1055.53,752.6 1055.62,744.6 1055.71,748.6 1055.80,768.6 1055.89,744.6 1055.98,748.6 1056.07,748.6 1056.16,748.6 1056.25,752.6 1056.34,748.6 1056.43,732.6 1056.52,764.6 1056.61,760.6 1056.70,748.6 1056.80,748.6 1056.89,760.6 1056.98,760.6 1057.07,764.6 1057.16,756.6 1057.25,752.6 1057.34,760.6 1057.43,736.6 1057.52,760.6 1057.61,748.6 1057.70,736.6 1057.79,736.6 1057.88,756.6 1057.97,744.6 1058.06,752.6 1058.16,748.6 1058.25,740.6 1058.34,752.6 1058.43,752.6 1058.52,736.6 1058.61,740.6 1058.70,756.6 1058.79,748.6 1058.88,748.6 1058.97,748.6 1059.06,756.6 1059.15,768.6 1059.24,748.6 1059.33,760.6 1059.42,748.6 1059.52,732.6 1059.61,736.6 1059.70,728.6 1059.79,756.6 1059.88,752.6 1059.97,772.6 1060.06,740.6 1060.15,736.6 1060.24,736.6 1060.33,744.6 1060.42,740.6 1060.51,748.6 1060.60,732.6 1060.69,752.6 1060.78,752.6 1060.88,768.6 1060.97,752.6 1061.06,740.6 1061.15,744.6 1061.24,760.6 1061.33,736.6 1061.42,736.6 1061.51,764.6 1061.60,764.6 1061.69,736.6 1061.78,748.6 1061.87,760.6 1061.96,744.6 1062.05,752.6 1062.14,756.6 1062.24,732.6 1062.33,760.6 1062.42,768.6 1062.51,736.6 1062.60,760.6 1062.69,756.6 1062.78,744.6 1062.87,740.6 1062.96,752.6 1063.05,748.6 1063.14,748.6 1063.23,732.6 1063.32,740.6 1063.41,752.6 1063.50,740.6 1063.60,740.6 1063.69,752.6 1063.78,740.6 1063.87,756.6 1063.96,732.6 1064.05,768.6 1064.14,768.6 1064.23,752.6 1064.32,752.6 1064.41,740.6 1064.50,748.6 1064.59,764.6 1064.68,736.6 1064.77,752.6 1064.86,744.6 1064.96,748.6 1065.05,740.6 1065.14,748.6 1065.23,756.6 1065.32,768.6 1065.41,740.6 1065.50,756.6 1065.59,748.6 1065.68,760.6 1065.77,752.6 1065.86,752.6 1065.95,736.6 1066.04,736.6 1066.13,768.6 1066.22,752.6 1066.32,744.6 1066.41,744.6 1066.50,748.6 1066.59,760.6 1066.68,740.6 1066.77,736.6 1066.86,756.6 1066.95,752.6 1067.04,748.6 1067.13,732.6 1067.22,740.6 1067.31,748.6 1067.40,744.6 1067.49,732.6 1067.58,752.6 1067.68,760.6 1067.77,764.6 1067.86,740.6 1067.95,752.6 1068.04,728.6 1068.13,724.6 1068.22,760.6 1068.31,756.6 1068.40,748.6 1068.49,748.6 1068.58,752.6 1068.67,748.6 1068.76,756.6 1068.85,744.6 1068.94,752.6 1069.04,740.6 1069.13,752.6 1069.22,752.6 1069.31,736.6 1069.40,728.6 1069.49,748.6 1069.58,760.6 1069.67,744.6 1069.76,740.6 1069.85,740.6 1069.94,748.6 1070.03,744.6 1070.12,752.6 1070.21,748.6 1070.30,756.6 1070.40,740.6 1070.49,744.6 1070.58,756.6 1070.67,752.6 1070.76,756.6 1070.85,752.6 1070.94,740.6 1071.03,752.6 1071.12,748.6 1071.21,768.6 1071.30,752.6 1071.39,760.6 1071.48,740.6 1071.57,760.6 1071.66,752.6 1071.76,748.6 1071.85,748.6 1071.94,752.6 1072.03,728.6 1072.12,736.6 1072.21,744.6 1072.30,748.6 1072.39,748.6 1072.48,740.6 1072.57,736.6 1072.66,736.6 1072.75,744.6 1072.84,748.6 1072.93,764.6 1073.02,764.6 1073.12,736.6 1073.21,756.6 1073.30,752.6 1073.39,740.6 1073.48,732.6 1073.57,748.6 1073.66,740.6 1073.75,748.6 1073.84,760.6 1073.93,752.6 1074.02,744.6 1074.11,736.6 1074.20,744.6 1074.29,760.6 1074.38,760.6 1074.48,740.6 1074.57,744.6 1074.66,736.6 1074.75,732.6 1074.84,756.6 1074.93,740.6 1075.02,748.6 1075.11,760.6 1075.20,732.6 1075.29,748.6 1075.38,736.6 1075.47,744.6 1075.56,768.6 1075.65,752.6 1075.74,740.6 1075.84,760.6 1075.93,752.6 1076.02,748.6 1076.11,752.6 1076.20,728.6 1076.29,760.6 1076.38,736.6 1076.47,752.6 1076.56,744.6 1076.65,772.6 1076.74,748.6 1076.83,736.6 1076.92,756.6 1077.01,736.6 1077.10,716.6 1077.20,756.6 1077.29,744.6 1077.38,748.6 1077.47,740.6 1077.56,740.6 1077.65,744.6 1077.74,764.6 1077.83,736.6 1077.92,752.6 1078.01,760.6 1078.10,740.6 1078.19,748.6 1078.28,776.6 1078.37,752.6 1078.46,740.6 1078.56,748.6 1078.65,744.6 1078.74,744.6 1078.83,760.6 1078.92,748.6 1079.01,740.6 1079.10,748.6 1079.19,740.6 1079.28,752.6 1079.37,736.6 1079.46,740.6 1079.55,740.6 1079.64,760.6 1079.73,752.6 1079.82,736.6 1079.92,740.6 1080.01,752.6 1080.10,736.6 1080.19,756.6 1080.28,748.6 1080.37,740.6 1080.46,760.6 1080.55,756.6 1080.64,756.6 1080.73,752.6 1080.82,760.6 1080.91,740.6 1081.00,752.6 1081.09,748.6 1081.18,752.6 1081.28,752.6 1081.37,740.6 1081.46,752.6 1081.55,764.6 1081.64,752.6 1081.73,752.6 1081.82,752.6 1081.91,776.6 1082.00,752.6 1082.09,752.6 1082.18,748.6 1082.27,736.6 1082.36,756.6 1082.45,760.6 1082.54,728.6 1082.64,744.6 1082.73,732.6 1082.82,752.6 1082.91,740.6 1083.00,744.6 1083.09,736.6 1083.18,748.6 1083.27,756.6 1083.36,736.6 1083.45,752.6 1083.54,760.6 1083.63,748.6 1083.72,764.6 1083.81,752.6 1083.90,732.6 1084.00,756.6 1084.09,732.6 1084.18,744.6 1084.27,740.6 1084.36,732.6 1084.45,740.6 1084.54,748.6 1084.63,752.6 1084.72,744.6 1084.81,756.6 1084.90,760.6 1084.99,768.6 1085.08,764.6 1085.17,736.6 1085.26,744.6 1085.36,744.6 1085.45,744.6 1085.54,764.6 1085.63,740.6 1085.72,748.6 1085.81,760.6 1085.90,748.6 1085.99,760.6 1086.08,752.6 1086.17,740.6 1086.26,736.6 1086.35,760.6 1086.44,756.6 1086.53,748.6 1086.62,756.6 1086.72,744.6 1086.81,748.6 1086.90,748.6 1086.99,740.6 1087.08,752.6 1087.17,748.6 1087.26,728.6 1087.35,736.6 1087.44,744.6 1087.53,748.6 1087.62,740.6 1087.71,744.6 1087.80,740.6 1087.89,764.6 1087.98,736.6 1088.08,736.6 1088.17,752.6 1088.26,752.6 1088.35,740.6 1088.44,748.6 1088.53,740.6 1088.62,744.6 1088.71,756.6 1088.80,748.6 1088.89,760.6 1088.98,736.6 1089.07,748.6 1089.16,764.6 1089.25,744.6 1089.34,748.6 1089.44,740.6 1089.53,740.6 1089.62,732.6 1089.71,732.6 1089.80,744.6 1089.89,764.6 1089.98,752.6 1090.07,760.6 1090.16,740.6 1090.25,756.6 1090.34,760.6 1090.43,740.6 1090.52,772.6 1090.61,748.6 1090.70,748.6 1090.80,748.6 1090.89,744.6 1090.98,756.6 1091.07,748.6 1091.16,760.6 1091.25,764.6 1091.34,752.6 1091.43,756.6 1091.52,772.6 1091.61,752.6 1091.70,752.6 1091.79,756.6 1091.88,728.6 1091.97,744.6 1092.06,756.6 1092.16,756.6 1092.25,740.6 1092.34,768.6 1092.43,744.6 1092.52,740.6 1092.61,748.6 1092.70,748.6 1092.79,768.6 1092.88,744.6 1092.97,748.6 1093.06,736.6 1093.15,756.6 1093.24,764.6 1093.33,740.6 1093.42,760.6 1093.52,748.6 1093.61,752.6 1093.70,748.6 1093.79,728.6 1093.88,756.6 1093.97,752.6 1094.06,756.6 1094.15,740.6 1094.24,752.6 1094.33,744.6 1094.42,756.6 1094.51,748.6 1094.60,732.6 1094.69,740.6 1094.78,748.6 1094.88,744.6 1094.97,728.6 1095.06,752.6 1095.15,744.6 1095.24,728.6 1095.33,744.6 1095.42,752.6 1095.51,748.6 1095.60,752.6 1095.69,744.6 1095.78,756.6 1095.87,748.6 1095.96,724.6 1096.05,760.6 1096.14,740.6 1096.24,764.6 1096.33,736.6 1096.42,736.6 1096.51,768.6 1096.60,764.6 1096.69,756.6 1096.78,784.6 1096.87,740.6 1096.96,752.6 1097.05,752.6 1097.14,764.6 1097.23,752.6 1097.32,748.6 1097.41,732.6 1097.50,752.6 1097.60,764.6 1097.69,756.6 1097.78,752.6 1097.87,756.6 1097.96,752.6 1098.05,760.6 1098.14,752.6 1098.23,748.6 1098.32,740.6 1098.41,756.6 1098.50,748.6 1098.59,752.6 1098.68,748.6 1098.77,744.6 1098.86,740.6 1098.96,744.6 1099.05,748.6 1099.14,760.6 1099.23,748.6 1099.32,760.6 1099.41,764.6 1099.50,760.6 1099.59,740.6 1099.68,744.6 1099.77,744.6 1099.86,728.6 1099.95,740.6 1100.04,748.6 1100.13,764.6 1100.22,736.6 1100.32,756.6 1100.41,732.6 1100.50,752.6 1100.59,744.6 1100.68,740.6 1100.77,756.6 1100.86,740.6 1100.95,748.6 1101.04,764.6 1101.13,760.6 1101.22,740.6 1101.31,744.6 1101.40,748.6 1101.49,744.6 1101.58,740.6 1101.68,740.6 1101.77,732.6 1101.86,744.6 1101.95,752.6 1102.04,736.6 1102.13,744.6 1102.22,744.6 1102.31,736.6 1102.40,736.6 1102.49,752.6 1102.58,760.6 1102.67,756.6 1102.76,728.6 1102.85,732.6 1102.94,744.6 1103.04,740.6 1103.13,756.6 1103.22,756.6 1103.31,740.6 1103.40,748.6 1103.49,752.6 1103.58,756.6 1103.67,732.6 1103.76,744.6 1103.85,744.6 1103.94,744.6 1104.03,732.6 1104.12,720.6 1104.21,756.6 1104.30,752.6 1104.40,748.6 1104.49,760.6 1104.58,740.6 1104.67,752.6 1104.76,752.6 1104.85,736.6 1104.94,748.6 1105.03,732.6 1105.12,752.6 1105.21,744.6 1105.30,752.6 1105.39,748.6 1105.48,748.6 1105.57,764.6 1105.66,748.6 1105.76,756.6 1105.85,756.6 1105.94,748.6 1106.03,748.6 1106.12,748.6 1106.21,740.6 1106.30,776.6 1106.39,740.6 1106.48,760.6 1106.57,756.6 1106.66,756.6 1106.75,760.6 1106.84,752.6 1106.93,756.6 1107.02,740.6 1107.12,744.6 1107.21,744.6 1107.30,756.6 1107.39,724.6 1107.48,764.6 1107.57,764.6 1107.66,752.6 1107.75,764.6 1107.84,760.6 1107.93,748.6 1108.02,744.6 1108.11,748.6 1108.20,736.6 1108.29,748.6 1108.38,744.6 1108.48,748.6 1108.57,728.6 1108.66,732.6 1108.75,752.6 1108.84,740.6 1108.93,744.6 1109.02,760.6 1109.11,752.6 1109.20,740.6 1109.29,744.6 1109.38,752.6 1109.47,740.6 1109.56,744.6 1109.65,752.6 1109.74,764.6 1109.84,740.6 1109.93,744.6 1110.02,764.6 1110.11,752.6 1110.20,752.6 1110.29,760.6 1110.38,748.6 1110.47,760.6 1110.56,744.6 1110.65,744.6 1110.74,736.6 1110.83,736.6 1110.92,740.6 1111.01,748.6 1111.10,728.6 1111.20,748.6 1111.29,752.6 1111.38,748.6 1111.47,752.6 1111.56,744.6 1111.65,748.6 1111.74,736.6 1111.83,744.6 1111.92,752.6 1112.01,752.6 1112.10,752.6 1112.19,740.6 1112.28,740.6 1112.37,744.6 1112.46,756.6 1112.56,764.6 1112.65,764.6 1112.74,756.6 1112.83,752.6 1112.92,752.6 1113.01,732.6 1113.10,756.6 1113.19,760.6 1113.28,756.6 1113.37,760.6 1113.46,776.6 1113.55,748.6 1113.64,744.6 1113.73,744.6 1113.82,772.6 1113.92,748.6 1114.01,768.6 1114.10,740.6 1114.19,760.6 1114.28,744.6 1114.37,748.6 1114.46,772.6 1114.55,760.6 1114.64,748.6 1114.73,740.6 1114.82,752.6 1114.91,756.6 1115.00,756.6 1115.09,752.6 1115.18,748.6 1115.28,756.6 1115.37,760.6 1115.46,732.6 1115.55,760.6 1115.64,756.6 1115.73,760.6 1115.82,748.6 1115.91,756.6 1116.00,732.6 1116.09,748.6 1116.18,756.6 1116.27,740.6 1116.36,744.6 1116.45,744.6 1116.54,756.6 1116.64,752.6 1116.73,736.6 1116.82,752.6 1116.91,752.6 1117.00,740.6 1117.09,732.6 1117.18,744.6 1117.27,732.6 1117.36,748.6 1117.45,744.6 1117.54,744.6 1117.63,748.6 1117.72,740.6 1117.81,740.6 1117.90,740.6 1118.00,744.6 1118.09,748.6 1118.18,740.6 1118.27,744.6 1118.36,736.6 1118.45,740.6 1118.54,768.6 1118.63,752.6 1118.72,736.6 1118.81,744.6 1118.90,728.6 1118.99,728.6 1119.08,744.6 1119.17,740.6 1119.26,728.6 1119.36,756.6 1119.45,748.6 1119.54,748.6 1119.63,744.6 1119.72,748.6 1119.81,772.6 1119.90,752.6 1119.99,744.6 1120.08,740.6 1120.17,760.6 1120.26,748.6 1120.35,740.6 1120.44,752.6 1120.53,756.6 1120.62,736.6 1120.72,756.6 1120.81,740.6 1120.90,756.6 1120.99,752.6 1121.08,764.6 1121.17,724.6 1121.26,744.6 1121.35,744.6 1121.44,752.6 1121.53,752.6 1121.62,764.6 1121.71,748.6 1121.80,744.6 1121.89,744.6 1121.98,744.6 1122.08,732.6 1122.17,772.6 1122.26,768.6 1122.35,756.6 1122.44,740.6 1122.53,736.6 1122.62,724.6 1122.71,752.6 1122.80,760.6 1122.89,740.6 1122.98,732.6 1123.07,744.6 1123.16,752.6 1123.25,736.6 1123.34,732.6 1123.44,764.6 1123.53,752.6 1123.62,732.6 1123.71,756.6 1123.80,744.6 1123.89,744.6 1123.98,752.6 1124.07,760.6 1124.16,736.6 1124.25,760.6 1124.34,752.6 1124.43,736.6 1124.52,768.6 1124.61,764.6 1124.70,736.6 1124.80,748.6 1124.89,764.6 1124.98,744.6 1125.07,760.6 1125.16,748.6 1125.25,744.6 1125.34,744.6 1125.43,756.6 1125.52,752.6 1125.61,764.6 1125.70,748.6 1125.79,744.6 1125.88,740.6 1125.97,748.6 1126.06,756.6 1126.16,760.6 1126.25,732.6 1126.34,740.6 1126.43,748.6 1126.52,736.6 1126.61,724.6 1126.70,728.6 1126.79,756.6 1126.88,760.6 1126.97,748.6 1127.06,760.6 1127.15,756.6 1127.24,744.6 1127.33,768.6 1127.42,752.6 1127.52,752.6 1127.61,752.6 1127.70,760.6 1127.79,764.6 1127.88,748.6 1127.97,736.6 1128.06,756.6 1128.15,772.6 1128.24,772.6 1128.33,732.6 1128.42,748.6 1128.51,736.6 1128.60,740.6 1128.69,748.6 1128.78,740.6 1128.88,744.6 1128.97,756.6 1129.06,736.6 1129.15,756.6 1129.24,736.6 1129.33,756.6 1129.42,756.6 1129.51,756.6 1129.60,748.6 1129.69,748.6 1129.78,744.6 1129.87,744.6 1129.96,728.6 1130.05,764.6 1130.14,744.6 1130.24,740.6 1130.33,756.6 1130.42,748.6 1130.51,748.6 1130.60,740.6 1130.69,748.6 1130.78,752.6 1130.87,764.6 1130.96,760.6 1131.05,744.6 1131.14,736.6 1131.23,744.6 1131.32,748.6 1131.41,760.6 1131.50,744.6 1131.60,740.6 1131.69,728.6 1131.78,780.6 1131.87,764.6 1131.96,760.6 1132.05,748.6 1132.14,756.6 1132.23,760.6 1132.32,760.6 1132.41,756.6 1132.50,748.6 1132.59,732.6 1132.68,748.6 1132.77,760.6 1132.86,752.6 1132.96,740.6 1133.05,748.6 1133.14,744.6 1133.23,768.6 1133.32,752.6 1133.41,776.6 1133.50,756.6 1133.59,752.6 1133.68,748.6 1133.77,748.6 1133.86,748.6 1133.95,768.6 1134.04,724.6 1134.13,740.6 1134.22,756.6 1134.32,748.6 1134.41,744.6 1134.50,744.6 1134.59,744.6 1134.68,744.6 1134.77,756.6 1134.86,732.6 1134.95,764.6 1135.04,740.6 1135.13,748.6 1135.22,748.6 1135.31,764.6 1135.40,736.6 1135.49,732.6 1135.58,752.6 1135.68,752.6 1135.77,756.6 1135.86,744.6 1135.95,756.6 1136.04,748.6 1136.13,748.6 1136.22,748.6 1136.31,752.6 1136.40,756.6 1136.49,752.6 1136.58,736.6 1136.67,748.6 1136.76,760.6 1136.85,744.6 1136.94,748.6 1137.04,748.6 1137.13,732.6 1137.22,752.6 1137.31,744.6 1137.40,748.6 1137.49,752.6 1137.58,740.6 1137.67,756.6 1137.76,748.6 1137.85,756.6 1137.94,756.6 1138.03,748.6 1138.12,744.6 1138.21,756.6 1138.30,732.6 1138.40,732.6 1138.49,744.6 1138.58,756.6 1138.67,756.6 1138.76,744.6 1138.85,740.6 1138.94,732.6 1139.03,748.6 1139.12,764.6 1139.21,744.6 1139.30,740.6 1139.39,748.6 1139.48,752.6 1139.57,748.6 1139.66,756.6 1139.76,740.6 1139.85,748.6 1139.94,740.6 1140.03,752.6 1140.12,752.6 1140.21,744.6 1140.30,752.6 1140.39,744.6 1140.48,732.6 1140.57,748.6 1140.66,744.6 1140.75,756.6 1140.84,736.6 1140.93,752.6 1141.02,760.6 1141.12,748.6 1141.21,740.6 1141.30,756.6 1141.39,756.6 1141.48,744.6 1141.57,760.6 1141.66,748.6 1141.75,768.6 1141.84,740.6 1141.93,736.6 1142.02,744.6 1142.11,740.6 1142.20,744.6 1142.29,732.6 1142.38,768.6 1142.48,756.6 1142.57,736.6 1142.66,748.6 1142.75,744.6 1142.84,736.6 1142.93,744.6 1143.02,764.6 1143.11,756.6 1143.20,748.6 1143.29,756.6 1143.38,732.6 1143.47,740.6 1143.56,748.6 1143.65,732.6 1143.74,764.6 1143.84,756.6 1143.93,744.6 1144.02,740.6 1144.11,744.6 1144.20,752.6 1144.29,760.6 1144.38,748.6 1144.47,744.6 1144.56,752.6 1144.65,752.6 1144.74,752.6 1144.83,756.6 1144.92,744.6 1145.01,740.6 1145.10,732.6 1145.20,764.6 1145.29,740.6 1145.38,744.6 1145.47,752.6 1145.56,724.6 1145.65,760.6 1145.74,752.6 1145.83,748.6 1145.92,748.6 1146.01,744.6 1146.10,744.6 1146.19,740.6 1146.28,752.6 1146.37,748.6 1146.46,736.6 1146.56,752.6 1146.65,748.6 1146.74,744.6 1146.83,764.6 1146.92,756.6 1147.01,740.6 1147.10,760.6 1147.19,748.6 1147.28,748.6 1147.37,772.6 1147.46,728.6 1147.55,740.6 1147.64,732.6 1147.73,756.6 1147.82,760.6 1147.92,760.6 1148.01,748.6 1148.10,744.6 1148.19,764.6 1148.28,748.6 1148.37,748.6 1148.46,756.6 1148.55,744.6 1148.64,736.6 1148.73,744.6 1148.82,772.6 1148.91,728.6 1149.00,752.6 1149.09,728.6 1149.18,740.6 1149.28,736.6 1149.37,748.6 1149.46,748.6 1149.55,736.6 1149.64,740.6 1149.73,748.6 1149.82,748.6 1149.91,740.6 1150.00,732.6 1150.09,756.6 1150.18,760.6 1150.27,756.6 1150.36,748.6 1150.45,752.6 1150.54,748.6 1150.64,748.6 1150.73,748.6 1150.82,736.6 1150.91,744.6 1151.00,740.6 1151.09,744.6 1151.18,748.6 1151.27,760.6 1151.36,752.6 1151.45,756.6 1151.54,744.6 1151.63,748.6 1151.72,752.6 1151.81,752.6 1151.90,756.6 1152.00,744.6 1152.09,720.6 1152.18,748.6 1152.27,756.6 1152.36,764.6 1152.45,732.6 1152.54,748.6 1152.63,752.6 1152.72,752.6 1152.81,736.6 1152.90,740.6 1152.99,756.6 1153.08,744.6 1153.17,732.6 1153.26,756.6 1153.36,744.6 1153.45,732.6 1153.54,740.6 1153.63,748.6 1153.72,732.6 1153.81,748.6 1153.90,744.6 1153.99,736.6 1154.08,752.6 1154.17,740.6 1154.26,748.6 1154.35,756.6 1154.44,756.6 1154.53,756.6 1154.62,744.6 1154.72,752.6 1154.81,736.6 1154.90,736.6 1154.99,760.6 1155.08,736.6 1155.17,748.6 1155.26,744.6 1155.35,732.6 1155.44,756.6 1155.53,716.6 1155.62,752.6 1155.71,748.6 1155.80,744.6 1155.89,748.6 1155.98,740.6 1156.08,744.6 1156.17,764.6 1156.26,744.6 1156.35,732.6 1156.44,764.6 1156.53,732.6 1156.62,744.6 1156.71,752.6 1156.80,752.6 1156.89,748.6 1156.98,732.6 1157.07,768.6 1157.16,748.6 1157.25,764.6 1157.34,744.6 1157.44,740.6 1157.53,740.6 1157.62,748.6 1157.71,744.6 1157.80,760.6 1157.89,732.6 1157.98,768.6 1158.07,736.6 1158.16,768.6 1158.25,752.6 1158.34,744.6 1158.43,748.6 1158.52,768.6 1158.61,756.6 1158.70,744.6 1158.80,764.6 1158.89,768.6 1158.98,736.6 1159.07,736.6 1159.16,744.6 1159.25,764.6 1159.34,744.6 1159.43,760.6 1159.52,740.6 1159.61,760.6 1159.70,732.6 1159.79,764.6 1159.88,736.6 1159.97,744.6 1160.06,740.6 1160.16,748.6 1160.25,740.6 1160.34,748.6 1160.43,756.6 1160.52,752.6 1160.61,748.6 1160.70,748.6 1160.79,752.6 1160.88,732.6 1160.97,748.6 1161.06,740.6 1161.15,752.6 1161.24,740.6 1161.33,748.6 1161.42,768.6 1161.52,744.6 1161.61,728.6 1161.70,740.6 1161.79,756.6 1161.88,764.6 1161.97,736.6 1162.06,752.6 1162.15,732.6 1162.24,736.6 1162.33,752.6 1162.42,748.6 1162.51,736.6 1162.60,760.6 1162.69,752.6 1162.78,748.6 1162.88,744.6 1162.97,748.6 1163.06,748.6 1163.15,752.6 1163.24,756.6 1163.33,748.6 1163.42,744.6 1163.51,756.6 1163.60,752.6 1163.69,740.6 1163.78,740.6 1163.87,756.6 1163.96,740.6 1164.05,748.6 1164.14,736.6 1164.24,748.6 1164.33,772.6 1164.42,756.6 1164.51,748.6 1164.60,740.6 1164.69,732.6 1164.78,748.6 1164.87,744.6 1164.96,756.6 1165.05,756.6 1165.14,748.6 1165.23,748.6 1165.32,740.6 1165.41,748.6 1165.50,740.6 1165.60,764.6 1165.69,756.6 1165.78,724.6 1165.87,760.6 1165.96,744.6 1166.05,748.6 1166.14,752.6 1166.23,740.6 1166.32,732.6 1166.41,748.6 1166.50,732.6 1166.59,756.6 1166.68,744.6 1166.77,736.6 1166.86,752.6 1166.96,740.6 1167.05,744.6 1167.14,744.6 1167.23,724.6 1167.32,752.6 1167.41,752.6 1167.50,752.6 1167.59,744.6 1167.68,736.6 1167.77,748.6 1167.86,756.6 1167.95,744.6 1168.04,740.6 1168.13,764.6 1168.22,740.6 1168.32,760.6 1168.41,732.6 1168.50,756.6 1168.59,760.6 1168.68,740.6 1168.77,748.6 1168.86,744.6 1168.95,736.6 1169.04,748.6 1169.13,748.6 1169.22,740.6 1169.31,748.6 1169.40,752.6 1169.49,752.6 1169.58,756.6 1169.68,736.6 1169.77,744.6 1169.86,748.6 1169.95,752.6 1170.04,752.6 1170.13,768.6 1170.22,744.6 1170.31,724.6 1170.40,748.6 1170.49,740.6 1170.58,752.6 1170.67,752.6 1170.76,760.6 1170.85,740.6 1170.94,748.6 1171.04,744.6 1171.13,748.6 1171.22,764.6 1171.31,748.6 1171.40,740.6 1171.49,744.6 1171.58,736.6 1171.67,740.6 1171.76,760.6 1171.85,744.6 1171.94,764.6 1172.03,756.6 1172.12,744.6 1172.21,736.6 1172.30,740.6 1172.40,748.6 1172.49,744.6 1172.58,760.6 1172.67,732.6 1172.76,756.6 1172.85,756.6 1172.94,732.6 1173.03,744.6 1173.12,752.6 1173.21,752.6 1173.30,756.6 1173.39,764.6 1173.48,740.6 1173.57,724.6 1173.66,776.6 1173.76,760.6 1173.85,748.6 1173.94,732.6 1174.03,752.6 1174.12,748.6 1174.21,744.6 1174.30,744.6 1174.39,728.6 1174.48,764.6 1174.57,736.6 1174.66,744.6 1174.75,760.6 1174.84,756.6 1174.93,760.6 1175.02,756.6 1175.12,748.6 1175.21,748.6 1175.30,756.6 1175.39,780.6 1175.48,728.6 1175.57,764.6 1175.66,752.6 1175.75,732.6 1175.84,748.6 1175.93,752.6 1176.02,756.6 1176.11,748.6 1176.20,748.6 1176.29,756.6 1176.38,760.6 1176.48,752.6 1176.57,768.6 1176.66,760.6 1176.75,736.6 1176.84,740.6 1176.93,752.6 1177.02,748.6 1177.11,740.6 1177.20,752.6 1177.29,752.6 1177.38,752.6 1177.47,736.6 1177.56,736.6 1177.65,736.6 1177.74,740.6 1177.84,740.6 1177.93,748.6 1178.02,740.6 1178.11,744.6 1178.20,720.6 1178.29,728.6 1178.38,744.6 1178.47,744.6 1178.56,712.6 1178.65,740.6 1178.74,752.6 1178.83,752.6 1178.92,736.6 1179.01,748.6 1179.10,752.6 1179.20,728.6 1179.29,748.6 1179.38,756.6 1179.47,740.6 1179.56,748.6 1179.65,744.6 1179.74,744.6 1179.83,744.6 1179.92,732.6 1180.01,768.6 1180.10,740.6 1180.19,744.6 1180.28,760.6 1180.37,760.6 1180.46,748.6 1180.56,736.6 1180.65,748.6 1180.74,752.6 1180.83,744.6 1180.92,732.6 1181.01,760.6 1181.10,756.6 1181.19,764.6 1181.28,760.6 1181.37,736.6 1181.46,748.6 1181.55,748.6 1181.64,756.6 1181.73,764.6 1181.82,760.6 1181.92,752.6 1182.01,752.6 1182.10,748.6 1182.19,768.6 1182.28,756.6 1182.37,740.6 1182.46,748.6 1182.55,756.6 1182.64,748.6 1182.73,752.6 1182.82,752.6 1182.91,756.6 1183.00,756.6 1183.09,744.6 1183.18,760.6 1183.28,752.6 1183.37,756.6 1183.46,740.6 1183.55,752.6 1183.64,756.6 1183.73,756.6 1183.82,740.6 1183.91,760.6"/>
<rect x="911.00" y="689.00" width="274.00" height="120.00" fill="none" stroke="#000" stroke-width="1.6"/>
<line x1="912.00" y1="809.00" x2="912.00" y2="816.00" stroke="#000" stroke-width="1.75"/>
<text x="912.00" y="831.80" font-size="10.18" text-anchor="middle" textLength="6.36" lengthAdjust="spacingAndGlyphs">0</text>
<line x1="957.33" y1="809.00" x2="957.33" y2="816.00" stroke="#000" stroke-width="1.75"/>
<text x="957.33" y="831.80" font-size="10.18" text-anchor="middle" textLength="19.08" lengthAdjust="spacingAndGlyphs">500</text>
<line x1="1002.67" y1="809.00" x2="1002.67" y2="816.00" stroke="#000" stroke-width="1.75"/>
<text x="1002.67" y="831.80" font-size="10.18" text-anchor="middle" textLength="25.44" lengthAdjust="spacingAndGlyphs">1000</text>
<line x1="1048.00" y1="809.00" x2="1048.00" y2="816.00" stroke="#000" stroke-width="1.75"/>
<text x="1048.00" y="831.80" font-size="10.18" text-anchor="middle" textLength="25.44" lengthAdjust="spacingAndGlyphs">1500</text>
<line x1="1093.33" y1="809.00" x2="1093.33" y2="816.00" stroke="#000" stroke-width="1.75"/>
<text x="1093.33" y="831.80" font-size="10.18" text-anchor="middle" textLength="25.44" lengthAdjust="spacingAndGlyphs">2000</text>
<line x1="1138.67" y1="809.00" x2="1138.67" y2="816.00" stroke="#000" stroke-width="1.75"/>
<text x="1138.67" y="831.80" font-size="10.18" text-anchor="middle" textLength="25.44" lengthAdjust="spacingAndGlyphs">2500</text>
<line x1="1184.00" y1="809.00" x2="1184.00" y2="816.00" stroke="#000" stroke-width="1.75"/>
<text x="1184.00" y="831.80" font-size="10.18" text-anchor="middle" textLength="25.44" lengthAdjust="spacingAndGlyphs">3000</text>
<line x1="904.00" y1="796.60" x2="911.00" y2="796.60" stroke="#000" stroke-width="1.75"/>
<text x="896.00" y="800.50" font-size="10.18" text-anchor="end" textLength="19.08" lengthAdjust="spacingAndGlyphs">990</text>
<line x1="904.00" y1="756.60" x2="911.00" y2="756.60" stroke="#000" stroke-width="1.75"/>
<text x="896.00" y="760.50" font-size="10.18" text-anchor="end" textLength="25.44" lengthAdjust="spacingAndGlyphs">1000</text>
<line x1="904.00" y1="716.60" x2="911.00" y2="716.60" stroke="#000" stroke-width="1.75"/>
<text x="896.00" y="720.50" font-size="10.18" text-anchor="end" textLength="25.44" lengthAdjust="spacingAndGlyphs">1010</text>
<text x="1049.40" y="850.00" font-size="10.61" text-anchor="middle" textLength="6.36" lengthAdjust="spacingAndGlyphs">Y</text>
<text x="858.60" y="750.10" font-size="10.61" text-anchor="middle" textLength="34.77" lengthAdjust="spacingAndGlyphs" transform="rotate(-90 858.60 750.10)">counts</text>
<text x="1194.30" y="749.30" font-size="10.61" text-anchor="middle" textLength="38.66" lengthAdjust="spacingAndGlyphs" transform="rotate(90 1194.30 749.30)">cut in y</text>
<rect x="1109" y="692.0" width="73" height="16" rx="2" fill="#fff" fill-opacity="0.8" stroke="#d6d6d6" stroke-width="1"/>
<line x1="1111.20" y1="700.00" x2="1133.60" y2="700.00" stroke="#0000ff" stroke-width="1.9"/>
<text x="1138.00" y="703.00" font-size="10.18" text-anchor="start" textLength="39.73" lengthAdjust="spacingAndGlyphs">x=1072</text>
</svg></div>
<script>
(function(){
var c=document.getElementById('img');var ctx=c.getContext('2d');
var W=c.width,H=c.height;var im=ctx.createImageData(W,H);var d=im.data;
var cols=[[10,0,0],[79,0,0],[212,0,0],[255,90,0],[255,224,0],[255,255,153],[255,255,255]];
var cum=[0.1587,0.2743,0.4207,0.5793,0.7257,0.8413,1.0];
var s=987654321;function r(){s^=s<<13;s^=s>>>17;s^=s<<5;return ((s>>>0)%1000000)/1000000;}
for(var i=0;i<W*H;i++){var u=r();var k=0;while(u>cum[k])k++;var p=i*4;d[p]=cols[k][0];d[p+1]=cols[k][1];d[p+2]=cols[k][2];d[p+3]=255;}
ctx.putImageData(im,0,0);
})();
</script>
</body></html>
